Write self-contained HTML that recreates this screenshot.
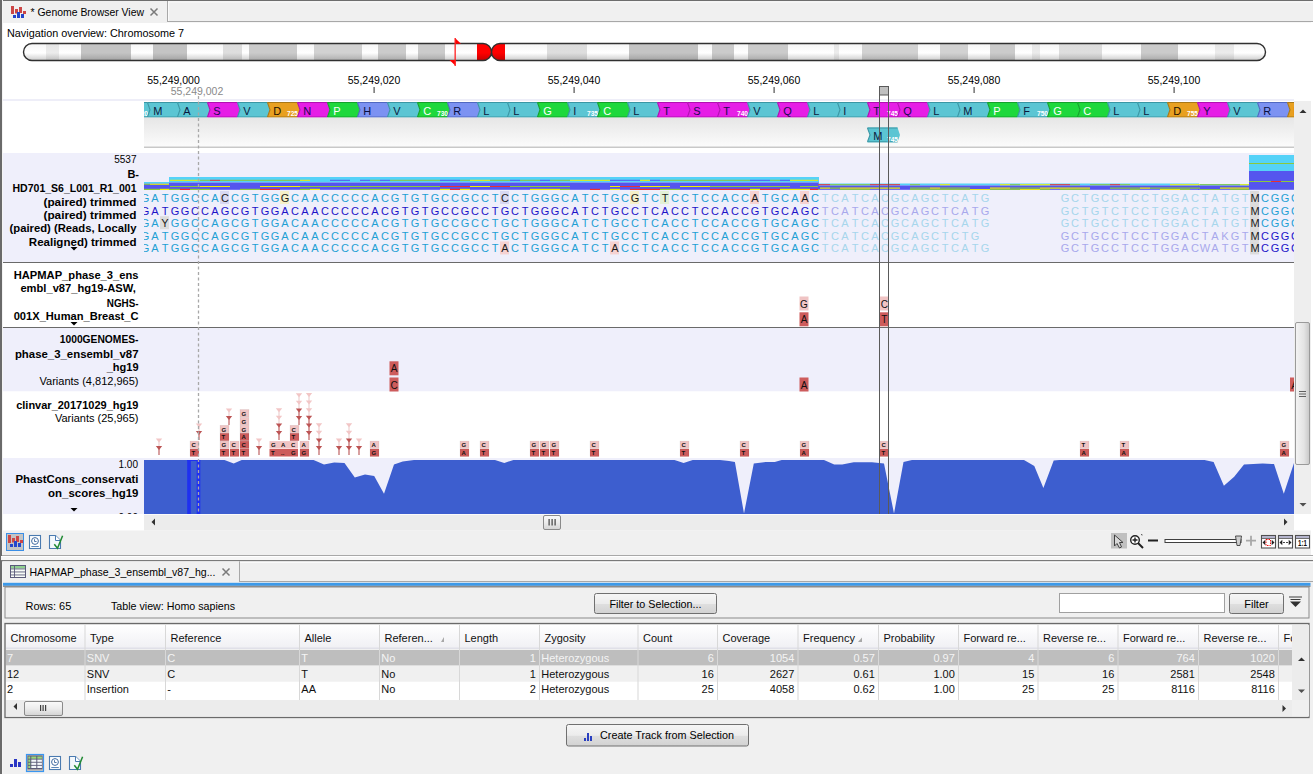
<!DOCTYPE html><html><head><meta charset="utf-8"><title>Genome Browser View</title><style>
*{margin:0;padding:0;box-sizing:border-box}
html,body{width:1313px;height:774px;overflow:hidden;background:#f0f0f0;font-family:"Liberation Sans", sans-serif;font-size:11px;color:#000}
.a{position:absolute}
.t{position:absolute;white-space:pre;line-height:1}
.b{font-weight:bold}
svg{position:absolute;left:0;top:0}
</style></head><body><svg width="1313" height="774" viewBox="0 0 1313 774" font-family="Liberation Sans, sans-serif"><rect x="0" y="0" width="1313" height="774" fill="#f0f0f0" /><rect x="0" y="0" width="1313" height="1" fill="#6e6e6e" /><rect x="0" y="0" width="2" height="774" fill="#6a6a6a" /><rect x="2" y="0" width="1" height="774" fill="#f4f4f4" /><rect x="3" y="1" width="1310" height="22" fill="#f0f0f0" /><rect x="167" y="21" width="1146" height="1" fill="#a8a8a8" /><rect x="167" y="1" width="1" height="21" fill="#a8a8a8" /><rect x="168" y="1.5" width="1145" height="1" fill="#fafafa" /><rect x="168" y="1.5" width="1" height="19.5" fill="#fafafa" /><rect x="167" y="22" width="1146" height="1" fill="#f6f6f6" /><rect x="11" y="6" width="3" height="8" fill="#cc4646" /><rect x="15" y="9" width="3" height="4.5" fill="#cc4646" /><rect x="19" y="7" width="3" height="6" fill="#cc4646" /><rect x="23" y="11" width="3" height="3" fill="#cc4646" /><rect x="13" y="15" width="3" height="3" fill="#2446cc" /><rect x="17" y="12" width="3" height="6" fill="#2446cc" /><rect x="21" y="14" width="3" height="4" fill="#2446cc" /><text x="30.5" y="16" font-size="11" fill="#000" text-anchor="start" font-weight="normal" textLength="113.5" lengthAdjust="spacingAndGlyphs">* Genome Browser View</text><path d="M150.5 8.5 L157.5 15.5 M157.5 8.5 L150.5 15.5" stroke="#7a7a7a" stroke-width="1.5"/><rect x="3" y="23" width="1308" height="532" fill="#ffffff" /><text x="7" y="37" font-size="11" fill="#000" text-anchor="start" font-weight="normal" textLength="177" lengthAdjust="spacingAndGlyphs">Navigation overview: Chromosome 7</text><defs>
<linearGradient id="gw" x1="0" y1="0" x2="0" y2="1"><stop offset="0" stop-color="#f4f4f4"/><stop offset="0.55" stop-color="#ffffff"/><stop offset="1" stop-color="#c8c8c8"/></linearGradient>
<linearGradient id="gl" x1="0" y1="0" x2="0" y2="1"><stop offset="0" stop-color="#e4e4e4"/><stop offset="0.55" stop-color="#ececec"/><stop offset="1" stop-color="#bcbcbc"/></linearGradient>
<linearGradient id="gg" x1="0" y1="0" x2="0" y2="1"><stop offset="0" stop-color="#c4c4c4"/><stop offset="0.55" stop-color="#c4c4c4"/><stop offset="1" stop-color="#a0a0a0"/></linearGradient>
<linearGradient id="gg2" x1="0" y1="0" x2="0" y2="1"><stop offset="0" stop-color="#cbcbcb"/><stop offset="0.55" stop-color="#cbcbcb"/><stop offset="1" stop-color="#a8a8a8"/></linearGradient>
<linearGradient id="gm" x1="0" y1="0" x2="0" y2="1"><stop offset="0" stop-color="#dcdcdc"/><stop offset="0.55" stop-color="#dedede"/><stop offset="1" stop-color="#b4b4b4"/></linearGradient>
<linearGradient id="gm2" x1="0" y1="0" x2="0" y2="1"><stop offset="0" stop-color="#d2d2d2"/><stop offset="0.55" stop-color="#d2d2d2"/><stop offset="1" stop-color="#acacac"/></linearGradient>
<linearGradient id="gr" x1="0" y1="0" x2="0" y2="1"><stop offset="0" stop-color="#ff0000"/><stop offset="0.55" stop-color="#ff0000"/><stop offset="1" stop-color="#c00000"/></linearGradient>
<linearGradient id="ggrad" x1="0" y1="0" x2="0" y2="1"><stop offset="0" stop-color="#e6e6e6"/><stop offset="1" stop-color="#fbfbfb"/></linearGradient>
<clipPath id="chr"><path d="M32 43.5 H483 A8.5 8.5 0 0 1 491.5 52 A8.5 8.5 0 0 1 500 43.5 H1257 A8.5 8.5 0 0 1 1257 60.5 H500 A8.5 8.5 0 0 1 491.5 52 A8.5 8.5 0 0 1 483 60.5 H32 A8.5 8.5 0 0 1 32 43.5 Z"/></clipPath>
<clipPath id="lclip"><rect x="0" y="458" width="144" height="56"/></clipPath><clipPath id="hclip"><rect x="0" y="620" width="1292" height="40"/></clipPath><clipPath id="trk"><rect x="144" y="95" width="1150" height="420"/></clipPath>
</defs><g clip-path="url(#chr)"><rect x="23" y="43" width="23" height="18" fill="url(#gw)" /><rect x="46" y="43" width="13" height="18" fill="url(#gl)" /><rect x="59" y="43" width="22" height="18" fill="url(#gw)" /><rect x="81" y="43" width="50" height="18" fill="url(#gg)" /><rect x="131" y="43" width="22" height="18" fill="url(#gw)" /><rect x="153" y="43" width="34" height="18" fill="url(#gg)" /><rect x="187" y="43" width="36" height="18" fill="url(#gw)" /><rect x="223" y="43" width="19" height="18" fill="url(#gm)" /><rect x="242" y="43" width="7" height="18" fill="url(#gw)" /><rect x="249" y="43" width="48" height="18" fill="url(#gg2)" /><rect x="297" y="43" width="17" height="18" fill="url(#gw)" /><rect x="314" y="43" width="48" height="18" fill="url(#gm2)" /><rect x="362" y="43" width="16" height="18" fill="url(#gw)" /><rect x="378" y="43" width="28" height="18" fill="url(#gg2)" /><rect x="406" y="43" width="12" height="18" fill="url(#gw)" /><rect x="418" y="43" width="27" height="18" fill="url(#gg2)" /><rect x="445" y="43" width="32" height="18" fill="url(#gw)" /><rect x="477" y="43" width="28" height="18" fill="url(#gr)" /><rect x="505" y="43" width="42" height="18" fill="url(#gw)" /><rect x="547" y="43" width="40" height="18" fill="url(#gm)" /><rect x="587" y="43" width="42" height="18" fill="url(#gw)" /><rect x="629" y="43" width="69" height="18" fill="url(#gg)" /><rect x="698" y="43" width="14" height="18" fill="url(#gw)" /><rect x="712" y="43" width="22" height="18" fill="url(#gg2)" /><rect x="734" y="43" width="14" height="18" fill="url(#gw)" /><rect x="748" y="43" width="40" height="18" fill="url(#gg2)" /><rect x="788" y="43" width="46" height="18" fill="url(#gw)" /><rect x="834" y="43" width="5" height="18" fill="url(#gl)" /><rect x="839" y="43" width="23" height="18" fill="url(#gw)" /><rect x="862" y="43" width="56" height="18" fill="url(#gm2)" /><rect x="918" y="43" width="22" height="18" fill="url(#gw)" /><rect x="940" y="43" width="28" height="18" fill="url(#gm2)" /><rect x="968" y="43" width="22" height="18" fill="url(#gw)" /><rect x="990" y="43" width="25" height="18" fill="url(#gg2)" /><rect x="1015" y="43" width="17" height="18" fill="url(#gw)" /><rect x="1032" y="43" width="8" height="18" fill="url(#gl)" /><rect x="1040" y="43" width="19" height="18" fill="url(#gw)" /><rect x="1059" y="43" width="43" height="18" fill="url(#gm)" /><rect x="1102" y="43" width="39" height="18" fill="url(#gw)" /><rect x="1141" y="43" width="37" height="18" fill="url(#gg2)" /><rect x="1178" y="43" width="37" height="18" fill="url(#gw)" /><rect x="1215" y="43" width="19" height="18" fill="url(#gl)" /><rect x="1234" y="43" width="32" height="18" fill="url(#gw)" /></g><path d="M32 43.5 H483 A8.5 8.5 0 0 1 491.5 52 A8.5 8.5 0 0 1 500 43.5 H1257 A8.5 8.5 0 0 1 1257 60.5 H500 A8.5 8.5 0 0 1 491.5 52 A8.5 8.5 0 0 1 483 60.5 H32 A8.5 8.5 0 0 1 32 43.5 Z" fill="none" stroke="#303030" stroke-width="1.4"/><path d="M455 38 L461 43.8 L455 43.8 Z M455.5 65.7 L449.5 60 L455.5 60 Z" fill="#ff0000"/><rect x="454.5" y="38" width="1.3" height="28" fill="#ff2020" /><text x="173.5" y="84" font-size="10.5" fill="#000" text-anchor="middle" font-weight="normal" >55,249,000</text><text x="374" y="84" font-size="10.5" fill="#000" text-anchor="middle" font-weight="normal" >55,249,020</text><rect x="373.5" y="87" width="1.2" height="6" fill="#505050" /><text x="574" y="84" font-size="10.5" fill="#000" text-anchor="middle" font-weight="normal" >55,249,040</text><rect x="573.5" y="87" width="1.2" height="6" fill="#505050" /><text x="774" y="84" font-size="10.5" fill="#000" text-anchor="middle" font-weight="normal" >55,249,060</text><rect x="773.5" y="87" width="1.2" height="6" fill="#505050" /><text x="974" y="84" font-size="10.5" fill="#000" text-anchor="middle" font-weight="normal" >55,249,080</text><rect x="973.5" y="87" width="1.2" height="6" fill="#505050" /><text x="1174" y="84" font-size="10.5" fill="#000" text-anchor="middle" font-weight="normal" >55,249,100</text><rect x="1173.5" y="87" width="1.2" height="6" fill="#505050" /><text x="197" y="95" font-size="10.5" fill="#8a8a8a" text-anchor="middle" font-weight="normal" >55,249,002</text><rect x="3" y="99" width="1291" height="2" fill="#eeeef8" /><g clip-path="url(#trk)"><path d="M117.5 102 L147.5 102 L150 109.75 L147.5 117.5 L117.5 117.5 L120 109.75 Z" fill="#5bc5d3"/><path d="M117.5 102.5 L147.5 102.5 M117.5 117.0 L147.5 117.0" stroke="#3a96a4" stroke-width="1"/><path d="M117.5 102.5 L120 109.75 L117.5 117.0" fill="none" stroke="#3a96a4" stroke-width="1.1"/><text x="148" y="116" font-size="7.5" fill="#ffffff" text-anchor="end" font-weight="bold" textLength="11" lengthAdjust="spacingAndGlyphs">720</text><path d="M147.5 102 L177.5 102 L180 109.75 L177.5 117.5 L147.5 117.5 L150 109.75 Z" fill="#5bc5d3"/><path d="M147.5 102.5 L177.5 102.5 M147.5 117.0 L177.5 117.0" stroke="#3a96a4" stroke-width="1"/><path d="M147.5 102.5 L150 109.75 L147.5 117.0" fill="none" stroke="#3a96a4" stroke-width="1.1"/><text x="153.3" y="114.6" font-size="11" fill="#0a1a40" text-anchor="start" font-weight="normal" >M</text><path d="M177.5 102 L207.5 102 L210 109.75 L207.5 117.5 L177.5 117.5 L180 109.75 Z" fill="#5bc5d3"/><path d="M177.5 102.5 L207.5 102.5 M177.5 117.0 L207.5 117.0" stroke="#3a96a4" stroke-width="1"/><path d="M177.5 102.5 L180 109.75 L177.5 117.0" fill="none" stroke="#3a96a4" stroke-width="1.1"/><text x="183.3" y="114.6" font-size="11" fill="#0a1a40" text-anchor="start" font-weight="normal" >A</text><path d="M207.5 102 L237.5 102 L240 109.75 L237.5 117.5 L207.5 117.5 L210 109.75 Z" fill="#e61ee6"/><path d="M207.5 102.5 L237.5 102.5 M207.5 117.0 L237.5 117.0" stroke="#b010b0" stroke-width="1"/><path d="M207.5 102.5 L210 109.75 L207.5 117.0" fill="none" stroke="#b010b0" stroke-width="1.1"/><text x="213.3" y="114.6" font-size="11" fill="#1a0a50" text-anchor="start" font-weight="normal" >S</text><path d="M237.5 102 L267.5 102 L270 109.75 L267.5 117.5 L237.5 117.5 L240 109.75 Z" fill="#5bc5d3"/><path d="M237.5 102.5 L267.5 102.5 M237.5 117.0 L267.5 117.0" stroke="#3a96a4" stroke-width="1"/><path d="M237.5 102.5 L240 109.75 L237.5 117.0" fill="none" stroke="#3a96a4" stroke-width="1.1"/><text x="243.3" y="114.6" font-size="11" fill="#0a1a40" text-anchor="start" font-weight="normal" >V</text><path d="M267.5 102 L297.5 102 L300 109.75 L297.5 117.5 L267.5 117.5 L270 109.75 Z" fill="#e8a020"/><path d="M267.5 102.5 L297.5 102.5 M267.5 117.0 L297.5 117.0" stroke="#a87818" stroke-width="1"/><path d="M267.5 102.5 L270 109.75 L267.5 117.0" fill="none" stroke="#a87818" stroke-width="1.1"/><text x="273.3" y="114.6" font-size="11" fill="#201000" text-anchor="start" font-weight="normal" >D</text><text x="298" y="116" font-size="7.5" fill="#ffffff" text-anchor="end" font-weight="bold" textLength="11" lengthAdjust="spacingAndGlyphs">725</text><path d="M297.5 102 L327.5 102 L330 109.75 L327.5 117.5 L297.5 117.5 L300 109.75 Z" fill="#e61ee6"/><path d="M297.5 102.5 L327.5 102.5 M297.5 117.0 L327.5 117.0" stroke="#b010b0" stroke-width="1"/><path d="M297.5 102.5 L300 109.75 L297.5 117.0" fill="none" stroke="#b010b0" stroke-width="1.1"/><text x="303.3" y="114.6" font-size="11" fill="#1a0a50" text-anchor="start" font-weight="normal" >N</text><path d="M327.5 102 L357.5 102 L360 109.75 L357.5 117.5 L327.5 117.5 L330 109.75 Z" fill="#1ed83c"/><path d="M327.5 102.5 L357.5 102.5 M327.5 117.0 L357.5 117.0" stroke="#14a02c" stroke-width="1"/><path d="M327.5 102.5 L330 109.75 L327.5 117.0" fill="none" stroke="#14a02c" stroke-width="1.1"/><text x="333.3" y="114.6" font-size="11" fill="#ffffff" text-anchor="start" font-weight="normal" >P</text><path d="M357.5 102 L387.5 102 L390 109.75 L387.5 117.5 L357.5 117.5 L360 109.75 Z" fill="#7c92f2"/><path d="M357.5 102.5 L387.5 102.5 M357.5 117.0 L387.5 117.0" stroke="#5068c0" stroke-width="1"/><path d="M357.5 102.5 L360 109.75 L357.5 117.0" fill="none" stroke="#5068c0" stroke-width="1.1"/><text x="363.3" y="114.6" font-size="11" fill="#0a1040" text-anchor="start" font-weight="normal" >H</text><path d="M387.5 102 L417.5 102 L420 109.75 L417.5 117.5 L387.5 117.5 L390 109.75 Z" fill="#5bc5d3"/><path d="M387.5 102.5 L417.5 102.5 M387.5 117.0 L417.5 117.0" stroke="#3a96a4" stroke-width="1"/><path d="M387.5 102.5 L390 109.75 L387.5 117.0" fill="none" stroke="#3a96a4" stroke-width="1.1"/><text x="393.3" y="114.6" font-size="11" fill="#0a1a40" text-anchor="start" font-weight="normal" >V</text><path d="M417.5 102 L447.5 102 L450 109.75 L447.5 117.5 L417.5 117.5 L420 109.75 Z" fill="#1ed83c"/><path d="M417.5 102.5 L447.5 102.5 M417.5 117.0 L447.5 117.0" stroke="#14a02c" stroke-width="1"/><path d="M417.5 102.5 L420 109.75 L417.5 117.0" fill="none" stroke="#14a02c" stroke-width="1.1"/><text x="423.3" y="114.6" font-size="11" fill="#ffffff" text-anchor="start" font-weight="normal" >C</text><text x="448" y="116" font-size="7.5" fill="#ffffff" text-anchor="end" font-weight="bold" textLength="11" lengthAdjust="spacingAndGlyphs">730</text><path d="M447.5 102 L477.5 102 L480 109.75 L477.5 117.5 L447.5 117.5 L450 109.75 Z" fill="#7c92f2"/><path d="M447.5 102.5 L477.5 102.5 M447.5 117.0 L477.5 117.0" stroke="#5068c0" stroke-width="1"/><path d="M447.5 102.5 L450 109.75 L447.5 117.0" fill="none" stroke="#5068c0" stroke-width="1.1"/><text x="453.3" y="114.6" font-size="11" fill="#0a1040" text-anchor="start" font-weight="normal" >R</text><path d="M477.5 102 L507.5 102 L510 109.75 L507.5 117.5 L477.5 117.5 L480 109.75 Z" fill="#5bc5d3"/><path d="M477.5 102.5 L507.5 102.5 M477.5 117.0 L507.5 117.0" stroke="#3a96a4" stroke-width="1"/><path d="M477.5 102.5 L480 109.75 L477.5 117.0" fill="none" stroke="#3a96a4" stroke-width="1.1"/><text x="483.3" y="114.6" font-size="11" fill="#0a1a40" text-anchor="start" font-weight="normal" >L</text><path d="M507.5 102 L537.5 102 L540 109.75 L537.5 117.5 L507.5 117.5 L510 109.75 Z" fill="#5bc5d3"/><path d="M507.5 102.5 L537.5 102.5 M507.5 117.0 L537.5 117.0" stroke="#3a96a4" stroke-width="1"/><path d="M507.5 102.5 L510 109.75 L507.5 117.0" fill="none" stroke="#3a96a4" stroke-width="1.1"/><text x="513.3" y="114.6" font-size="11" fill="#0a1a40" text-anchor="start" font-weight="normal" >L</text><path d="M537.5 102 L567.5 102 L570 109.75 L567.5 117.5 L537.5 117.5 L540 109.75 Z" fill="#1ed83c"/><path d="M537.5 102.5 L567.5 102.5 M537.5 117.0 L567.5 117.0" stroke="#14a02c" stroke-width="1"/><path d="M537.5 102.5 L540 109.75 L537.5 117.0" fill="none" stroke="#14a02c" stroke-width="1.1"/><text x="543.3" y="114.6" font-size="11" fill="#ffffff" text-anchor="start" font-weight="normal" >G</text><path d="M567.5 102 L597.5 102 L600 109.75 L597.5 117.5 L567.5 117.5 L570 109.75 Z" fill="#5bc5d3"/><path d="M567.5 102.5 L597.5 102.5 M567.5 117.0 L597.5 117.0" stroke="#3a96a4" stroke-width="1"/><path d="M567.5 102.5 L570 109.75 L567.5 117.0" fill="none" stroke="#3a96a4" stroke-width="1.1"/><text x="573.3" y="114.6" font-size="11" fill="#0a1a40" text-anchor="start" font-weight="normal" >I</text><text x="598" y="116" font-size="7.5" fill="#ffffff" text-anchor="end" font-weight="bold" textLength="11" lengthAdjust="spacingAndGlyphs">735</text><path d="M597.5 102 L627.5 102 L630 109.75 L627.5 117.5 L597.5 117.5 L600 109.75 Z" fill="#1ed83c"/><path d="M597.5 102.5 L627.5 102.5 M597.5 117.0 L627.5 117.0" stroke="#14a02c" stroke-width="1"/><path d="M597.5 102.5 L600 109.75 L597.5 117.0" fill="none" stroke="#14a02c" stroke-width="1.1"/><text x="603.3" y="114.6" font-size="11" fill="#ffffff" text-anchor="start" font-weight="normal" >C</text><path d="M627.5 102 L657.5 102 L660 109.75 L657.5 117.5 L627.5 117.5 L630 109.75 Z" fill="#5bc5d3"/><path d="M627.5 102.5 L657.5 102.5 M627.5 117.0 L657.5 117.0" stroke="#3a96a4" stroke-width="1"/><path d="M627.5 102.5 L630 109.75 L627.5 117.0" fill="none" stroke="#3a96a4" stroke-width="1.1"/><text x="633.3" y="114.6" font-size="11" fill="#0a1a40" text-anchor="start" font-weight="normal" >L</text><path d="M657.5 102 L687.5 102 L690 109.75 L687.5 117.5 L657.5 117.5 L660 109.75 Z" fill="#e61ee6"/><path d="M657.5 102.5 L687.5 102.5 M657.5 117.0 L687.5 117.0" stroke="#b010b0" stroke-width="1"/><path d="M657.5 102.5 L660 109.75 L657.5 117.0" fill="none" stroke="#b010b0" stroke-width="1.1"/><text x="663.3" y="114.6" font-size="11" fill="#1a0a50" text-anchor="start" font-weight="normal" >T</text><path d="M687.5 102 L717.5 102 L720 109.75 L717.5 117.5 L687.5 117.5 L690 109.75 Z" fill="#e61ee6"/><path d="M687.5 102.5 L717.5 102.5 M687.5 117.0 L717.5 117.0" stroke="#b010b0" stroke-width="1"/><path d="M687.5 102.5 L690 109.75 L687.5 117.0" fill="none" stroke="#b010b0" stroke-width="1.1"/><text x="693.3" y="114.6" font-size="11" fill="#1a0a50" text-anchor="start" font-weight="normal" >S</text><path d="M717.5 102 L747.5 102 L750 109.75 L747.5 117.5 L717.5 117.5 L720 109.75 Z" fill="#e61ee6"/><path d="M717.5 102.5 L747.5 102.5 M717.5 117.0 L747.5 117.0" stroke="#b010b0" stroke-width="1"/><path d="M717.5 102.5 L720 109.75 L717.5 117.0" fill="none" stroke="#b010b0" stroke-width="1.1"/><text x="723.3" y="114.6" font-size="11" fill="#1a0a50" text-anchor="start" font-weight="normal" >T</text><text x="748" y="116" font-size="7.5" fill="#ffffff" text-anchor="end" font-weight="bold" textLength="11" lengthAdjust="spacingAndGlyphs">740</text><path d="M747.5 102 L777.5 102 L780 109.75 L777.5 117.5 L747.5 117.5 L750 109.75 Z" fill="#5bc5d3"/><path d="M747.5 102.5 L777.5 102.5 M747.5 117.0 L777.5 117.0" stroke="#3a96a4" stroke-width="1"/><path d="M747.5 102.5 L750 109.75 L747.5 117.0" fill="none" stroke="#3a96a4" stroke-width="1.1"/><text x="753.3" y="114.6" font-size="11" fill="#0a1a40" text-anchor="start" font-weight="normal" >V</text><path d="M777.5 102 L807.5 102 L810 109.75 L807.5 117.5 L777.5 117.5 L780 109.75 Z" fill="#e61ee6"/><path d="M777.5 102.5 L807.5 102.5 M777.5 117.0 L807.5 117.0" stroke="#b010b0" stroke-width="1"/><path d="M777.5 102.5 L780 109.75 L777.5 117.0" fill="none" stroke="#b010b0" stroke-width="1.1"/><text x="783.3" y="114.6" font-size="11" fill="#1a0a50" text-anchor="start" font-weight="normal" >Q</text><path d="M807.5 102 L837.5 102 L840 109.75 L837.5 117.5 L807.5 117.5 L810 109.75 Z" fill="#5bc5d3"/><path d="M807.5 102.5 L837.5 102.5 M807.5 117.0 L837.5 117.0" stroke="#3a96a4" stroke-width="1"/><path d="M807.5 102.5 L810 109.75 L807.5 117.0" fill="none" stroke="#3a96a4" stroke-width="1.1"/><text x="813.3" y="114.6" font-size="11" fill="#0a1a40" text-anchor="start" font-weight="normal" >L</text><path d="M837.5 102 L867.5 102 L870 109.75 L867.5 117.5 L837.5 117.5 L840 109.75 Z" fill="#5bc5d3"/><path d="M837.5 102.5 L867.5 102.5 M837.5 117.0 L867.5 117.0" stroke="#3a96a4" stroke-width="1"/><path d="M837.5 102.5 L840 109.75 L837.5 117.0" fill="none" stroke="#3a96a4" stroke-width="1.1"/><text x="843.3" y="114.6" font-size="11" fill="#0a1a40" text-anchor="start" font-weight="normal" >I</text><path d="M867.5 102 L897.5 102 L900 109.75 L897.5 117.5 L867.5 117.5 L870 109.75 Z" fill="#e61ee6"/><path d="M867.5 102.5 L897.5 102.5 M867.5 117.0 L897.5 117.0" stroke="#b010b0" stroke-width="1"/><path d="M867.5 102.5 L870 109.75 L867.5 117.0" fill="none" stroke="#b010b0" stroke-width="1.1"/><text x="873.3" y="114.6" font-size="11" fill="#1a0a50" text-anchor="start" font-weight="normal" >T</text><text x="898" y="116" font-size="7.5" fill="#ffffff" text-anchor="end" font-weight="bold" textLength="11" lengthAdjust="spacingAndGlyphs">745</text><path d="M897.5 102 L927.5 102 L930 109.75 L927.5 117.5 L897.5 117.5 L900 109.75 Z" fill="#e61ee6"/><path d="M897.5 102.5 L927.5 102.5 M897.5 117.0 L927.5 117.0" stroke="#b010b0" stroke-width="1"/><path d="M897.5 102.5 L900 109.75 L897.5 117.0" fill="none" stroke="#b010b0" stroke-width="1.1"/><text x="903.3" y="114.6" font-size="11" fill="#1a0a50" text-anchor="start" font-weight="normal" >Q</text><path d="M927.5 102 L957.5 102 L960 109.75 L957.5 117.5 L927.5 117.5 L930 109.75 Z" fill="#5bc5d3"/><path d="M927.5 102.5 L957.5 102.5 M927.5 117.0 L957.5 117.0" stroke="#3a96a4" stroke-width="1"/><path d="M927.5 102.5 L930 109.75 L927.5 117.0" fill="none" stroke="#3a96a4" stroke-width="1.1"/><text x="933.3" y="114.6" font-size="11" fill="#0a1a40" text-anchor="start" font-weight="normal" >L</text><path d="M957.5 102 L987.5 102 L990 109.75 L987.5 117.5 L957.5 117.5 L960 109.75 Z" fill="#5bc5d3"/><path d="M957.5 102.5 L987.5 102.5 M957.5 117.0 L987.5 117.0" stroke="#3a96a4" stroke-width="1"/><path d="M957.5 102.5 L960 109.75 L957.5 117.0" fill="none" stroke="#3a96a4" stroke-width="1.1"/><text x="963.3" y="114.6" font-size="11" fill="#0a1a40" text-anchor="start" font-weight="normal" >M</text><path d="M987.5 102 L1017.5 102 L1020 109.75 L1017.5 117.5 L987.5 117.5 L990 109.75 Z" fill="#1ed83c"/><path d="M987.5 102.5 L1017.5 102.5 M987.5 117.0 L1017.5 117.0" stroke="#14a02c" stroke-width="1"/><path d="M987.5 102.5 L990 109.75 L987.5 117.0" fill="none" stroke="#14a02c" stroke-width="1.1"/><text x="993.3" y="114.6" font-size="11" fill="#ffffff" text-anchor="start" font-weight="normal" >P</text><path d="M1017.5 102 L1047.5 102 L1050 109.75 L1047.5 117.5 L1017.5 117.5 L1020 109.75 Z" fill="#5bc5d3"/><path d="M1017.5 102.5 L1047.5 102.5 M1017.5 117.0 L1047.5 117.0" stroke="#3a96a4" stroke-width="1"/><path d="M1017.5 102.5 L1020 109.75 L1017.5 117.0" fill="none" stroke="#3a96a4" stroke-width="1.1"/><text x="1023.3" y="114.6" font-size="11" fill="#0a1a40" text-anchor="start" font-weight="normal" >F</text><text x="1048" y="116" font-size="7.5" fill="#ffffff" text-anchor="end" font-weight="bold" textLength="11" lengthAdjust="spacingAndGlyphs">750</text><path d="M1047.5 102 L1077.5 102 L1080 109.75 L1077.5 117.5 L1047.5 117.5 L1050 109.75 Z" fill="#1ed83c"/><path d="M1047.5 102.5 L1077.5 102.5 M1047.5 117.0 L1077.5 117.0" stroke="#14a02c" stroke-width="1"/><path d="M1047.5 102.5 L1050 109.75 L1047.5 117.0" fill="none" stroke="#14a02c" stroke-width="1.1"/><text x="1053.3" y="114.6" font-size="11" fill="#ffffff" text-anchor="start" font-weight="normal" >G</text><path d="M1077.5 102 L1107.5 102 L1110 109.75 L1107.5 117.5 L1077.5 117.5 L1080 109.75 Z" fill="#1ed83c"/><path d="M1077.5 102.5 L1107.5 102.5 M1077.5 117.0 L1107.5 117.0" stroke="#14a02c" stroke-width="1"/><path d="M1077.5 102.5 L1080 109.75 L1077.5 117.0" fill="none" stroke="#14a02c" stroke-width="1.1"/><text x="1083.3" y="114.6" font-size="11" fill="#ffffff" text-anchor="start" font-weight="normal" >C</text><path d="M1107.5 102 L1137.5 102 L1140 109.75 L1137.5 117.5 L1107.5 117.5 L1110 109.75 Z" fill="#5bc5d3"/><path d="M1107.5 102.5 L1137.5 102.5 M1107.5 117.0 L1137.5 117.0" stroke="#3a96a4" stroke-width="1"/><path d="M1107.5 102.5 L1110 109.75 L1107.5 117.0" fill="none" stroke="#3a96a4" stroke-width="1.1"/><text x="1113.3" y="114.6" font-size="11" fill="#0a1a40" text-anchor="start" font-weight="normal" >L</text><path d="M1137.5 102 L1167.5 102 L1170 109.75 L1167.5 117.5 L1137.5 117.5 L1140 109.75 Z" fill="#5bc5d3"/><path d="M1137.5 102.5 L1167.5 102.5 M1137.5 117.0 L1167.5 117.0" stroke="#3a96a4" stroke-width="1"/><path d="M1137.5 102.5 L1140 109.75 L1137.5 117.0" fill="none" stroke="#3a96a4" stroke-width="1.1"/><text x="1143.3" y="114.6" font-size="11" fill="#0a1a40" text-anchor="start" font-weight="normal" >L</text><path d="M1167.5 102 L1197.5 102 L1200 109.75 L1197.5 117.5 L1167.5 117.5 L1170 109.75 Z" fill="#e8a020"/><path d="M1167.5 102.5 L1197.5 102.5 M1167.5 117.0 L1197.5 117.0" stroke="#a87818" stroke-width="1"/><path d="M1167.5 102.5 L1170 109.75 L1167.5 117.0" fill="none" stroke="#a87818" stroke-width="1.1"/><text x="1173.3" y="114.6" font-size="11" fill="#201000" text-anchor="start" font-weight="normal" >D</text><text x="1198" y="116" font-size="7.5" fill="#ffffff" text-anchor="end" font-weight="bold" textLength="11" lengthAdjust="spacingAndGlyphs">755</text><path d="M1197.5 102 L1227.5 102 L1230 109.75 L1227.5 117.5 L1197.5 117.5 L1200 109.75 Z" fill="#e61ee6"/><path d="M1197.5 102.5 L1227.5 102.5 M1197.5 117.0 L1227.5 117.0" stroke="#b010b0" stroke-width="1"/><path d="M1197.5 102.5 L1200 109.75 L1197.5 117.0" fill="none" stroke="#b010b0" stroke-width="1.1"/><text x="1203.3" y="114.6" font-size="11" fill="#1a0a50" text-anchor="start" font-weight="normal" >Y</text><path d="M1227.5 102 L1257.5 102 L1260 109.75 L1257.5 117.5 L1227.5 117.5 L1230 109.75 Z" fill="#5bc5d3"/><path d="M1227.5 102.5 L1257.5 102.5 M1227.5 117.0 L1257.5 117.0" stroke="#3a96a4" stroke-width="1"/><path d="M1227.5 102.5 L1230 109.75 L1227.5 117.0" fill="none" stroke="#3a96a4" stroke-width="1.1"/><text x="1233.3" y="114.6" font-size="11" fill="#0a1a40" text-anchor="start" font-weight="normal" >V</text><path d="M1257.5 102 L1287.5 102 L1290 109.75 L1287.5 117.5 L1257.5 117.5 L1260 109.75 Z" fill="#7c92f2"/><path d="M1257.5 102.5 L1287.5 102.5 M1257.5 117.0 L1287.5 117.0" stroke="#5068c0" stroke-width="1"/><path d="M1257.5 102.5 L1260 109.75 L1257.5 117.0" fill="none" stroke="#5068c0" stroke-width="1.1"/><text x="1263.3" y="114.6" font-size="11" fill="#0a1040" text-anchor="start" font-weight="normal" >R</text><path d="M1287.5 102 L1317.5 102 L1320 109.75 L1317.5 117.5 L1287.5 117.5 L1290 109.75 Z" fill="#e8a020"/><path d="M1287.5 102.5 L1317.5 102.5 M1287.5 117.0 L1317.5 117.0" stroke="#a87818" stroke-width="1"/><path d="M1287.5 102.5 L1290 109.75 L1287.5 117.0" fill="none" stroke="#a87818" stroke-width="1.1"/><text x="1293.3" y="114.6" font-size="11" fill="#201000" text-anchor="start" font-weight="normal" >D</text><rect x="144" y="117.5" width="1150" height="29" fill="url(#ggrad)" /><rect x="144" y="146.5" width="1150" height="1.5" fill="#c8c8c8" /><path d="M867.5 127.5 L897.5 127.5 L900 134.9 L897.5 142.3 L867.5 142.3 L870 134.9 Z" fill="#5bc5d3"/><path d="M867.5 128.0 L897.5 128.0 M867.5 141.8 L897.5 141.8" stroke="#3a96a4" stroke-width="1"/><path d="M867.5 128.0 L870 134.9 L867.5 141.8" fill="none" stroke="#3a96a4" stroke-width="1.1"/><text x="873.3" y="140.1" font-size="11" fill="#0a1a40" text-anchor="start" font-weight="normal" >M</text><text x="898" y="141.5" font-size="7.5" fill="#ffffff" text-anchor="end" font-weight="bold" textLength="11" lengthAdjust="spacingAndGlyphs">745</text></g><rect x="3" y="153" width="1291" height="109" fill="#efeffb" /><rect x="3" y="262" width="1291" height="1" fill="#6a6a6a" /><rect x="3" y="263" width="1291" height="64" fill="#ffffff" /><rect x="3" y="327" width="1291" height="1" fill="#6a6a6a" /><rect x="3" y="328" width="1291" height="63.5" fill="#efeffb" /><rect x="3" y="391.5" width="1291" height="66.5" fill="#ffffff" /><rect x="3" y="458" width="1291" height="56" fill="#efeffb" /><rect x="3" y="514" width="141" height="16.5" fill="#ffffff" /><text x="136.5" y="163" font-size="10" fill="#000" text-anchor="end" font-weight="normal" >5537</text><text x="139" y="178" font-size="11" fill="#000" text-anchor="end" font-weight="bold" >B-</text><text x="136.5" y="191.8" font-size="11" fill="#000" text-anchor="end" font-weight="bold" textLength="124" lengthAdjust="spacingAndGlyphs">HD701_S6_L001_R1_001</text><text x="136.5" y="205.6" font-size="11" fill="#000" text-anchor="end" font-weight="bold" textLength="93" lengthAdjust="spacingAndGlyphs">(paired) trimmed</text><text x="136.5" y="218.6" font-size="11" fill="#000" text-anchor="end" font-weight="bold" textLength="93" lengthAdjust="spacingAndGlyphs">(paired) trimmed</text><text x="136.5" y="232.4" font-size="11" fill="#000" text-anchor="end" font-weight="bold" textLength="127" lengthAdjust="spacingAndGlyphs">(paired) (Reads, Locally</text><text x="136.5" y="246.4" font-size="11" fill="#000" text-anchor="end" font-weight="bold" textLength="107.7" lengthAdjust="spacingAndGlyphs">Realigned) trimmed</text><path d="M70.5 247 L77.5 247 L74 250.5 Z" fill="#000"/><text x="138.5" y="278.8" font-size="11" fill="#000" text-anchor="end" font-weight="bold" textLength="124.8" lengthAdjust="spacingAndGlyphs">HAPMAP_phase_3_ens</text><text x="135.8" y="292.4" font-size="11" fill="#000" text-anchor="end" font-weight="bold" textLength="115.4" lengthAdjust="spacingAndGlyphs">embl_v87_hg19-ASW,</text><text x="138.5" y="306.9" font-size="11" fill="#000" text-anchor="end" font-weight="bold" textLength="31.7" lengthAdjust="spacingAndGlyphs">NGHS-</text><text x="138.5" y="319.5" font-size="11" fill="#000" text-anchor="end" font-weight="bold" textLength="124.8" lengthAdjust="spacingAndGlyphs">001X_Human_Breast_C</text><path d="M70.5 322 L77.5 322 L74 325.5 Z" fill="#000"/><text x="138.5" y="343" font-size="11" fill="#000" text-anchor="end" font-weight="bold" textLength="78.7" lengthAdjust="spacingAndGlyphs">1000GENOMES-</text><text x="138.5" y="357.5" font-size="11" fill="#000" text-anchor="end" font-weight="bold" textLength="123.6" lengthAdjust="spacingAndGlyphs">phase_3_ensembl_v87</text><text x="138.5" y="371" font-size="11" fill="#000" text-anchor="end" font-weight="bold" >_hg19</text><text x="138.5" y="384.6" font-size="11" fill="#000" text-anchor="end" font-weight="normal" textLength="99" lengthAdjust="spacingAndGlyphs">Variants (4,812,965)</text><text x="138.5" y="408.8" font-size="11" fill="#000" text-anchor="end" font-weight="bold" >clinvar_20171029_hg19</text><text x="138.5" y="422.4" font-size="11" fill="#000" text-anchor="end" font-weight="normal" >Variants (25,965)</text><text x="138" y="467.6" font-size="10" fill="#000" text-anchor="end" font-weight="normal" >1.00</text><text x="138.5" y="483" font-size="11" fill="#000" text-anchor="end" font-weight="bold" textLength="123" lengthAdjust="spacingAndGlyphs">PhastCons_conservati</text><text x="138.5" y="496.6" font-size="11" fill="#000" text-anchor="end" font-weight="bold" textLength="90.4" lengthAdjust="spacingAndGlyphs">on_scores_hg19</text><path d="M70.5 508 L77.5 508 L74 511.5 Z" fill="#000"/><g clip-path="url(#lclip)"><text x="138" y="520.5" font-size="10" fill="#000" text-anchor="end" font-weight="normal" >0.00</text></g><g clip-path="url(#trk)"><rect x="144" y="182" width="25" height="1.8" fill="#55d2f8" /><rect x="144" y="183.8" width="25" height="6" fill="#5555ee" /><rect x="169" y="177" width="650" height="5.5" fill="#55d2f8" /><rect x="169" y="182.5" width="650" height="7.3" fill="#5555ee" /><rect x="818" y="183.5" width="381" height="2" fill="#55d2f8" /><rect x="818" y="185.5" width="381" height="4.3" fill="#5555ee" /><rect x="1198" y="184" width="51" height="1.5" fill="#55d2f8" /><rect x="1198" y="185.5" width="51" height="4.3" fill="#5555ee" /><rect x="1249" y="155" width="45" height="16" fill="#55d2f8" /><rect x="1249" y="171" width="45" height="18.8" fill="#5555ee" /><rect x="1249" y="163" width="45" height="1" fill="#8cc83c" /><rect x="1249" y="181" width="45" height="1" fill="#8cc83c" /><rect x="1271" y="181" width="10" height="1" fill="#e83030" /><rect x="170" y="179.8" width="20" height="1" fill="#f0f000" /><rect x="190" y="179.8" width="10" height="1" fill="#f0f000" /><rect x="200" y="179.8" width="10" height="1" fill="#8cc83c" /><rect x="210" y="179.8" width="10" height="1" fill="#e83030" /><rect x="220" y="179.8" width="10" height="1" fill="#8cc83c" /><rect x="230" y="179.8" width="20" height="1" fill="#8cc83c" /><rect x="250" y="179.8" width="10" height="1" fill="#8cc83c" /><rect x="260" y="179.8" width="20" height="1" fill="#8cc83c" /><rect x="280" y="179.8" width="20" height="1" fill="#8cc83c" /><rect x="300" y="179.8" width="10" height="1" fill="#f0f000" /><rect x="330" y="179.8" width="20" height="1" fill="#5555ee" /><rect x="360" y="179.8" width="10" height="1" fill="#5555ee" /><rect x="370" y="179.8" width="10" height="1" fill="#8cc83c" /><rect x="380" y="179.8" width="10" height="1" fill="#5555ee" /><rect x="390" y="179.8" width="20" height="1" fill="#8cc83c" /><rect x="410" y="179.8" width="30" height="1" fill="#8cc83c" /><rect x="440" y="179.8" width="20" height="1" fill="#5555ee" /><rect x="460" y="179.8" width="10" height="1" fill="#8cc83c" /><rect x="470" y="179.8" width="20" height="1" fill="#f0f000" /><rect x="490" y="179.8" width="20" height="1" fill="#8cc83c" /><rect x="510" y="179.8" width="10" height="1" fill="#5555ee" /><rect x="520" y="179.8" width="20" height="1" fill="#8cc83c" /><rect x="540" y="179.8" width="10" height="1" fill="#5555ee" /><rect x="550" y="179.8" width="20" height="1" fill="#8cc83c" /><rect x="570" y="179.8" width="10" height="1" fill="#f0f000" /><rect x="580" y="179.8" width="30" height="1" fill="#f0f000" /><rect x="610" y="179.8" width="10" height="1" fill="#5555ee" /><rect x="620" y="179.8" width="20" height="1" fill="#5555ee" /><rect x="640" y="179.8" width="10" height="1" fill="#f0f000" /><rect x="650" y="179.8" width="10" height="1" fill="#5555ee" /><rect x="660" y="179.8" width="10" height="1" fill="#8cc83c" /><rect x="670" y="179.8" width="20" height="1" fill="#8cc83c" /><rect x="690" y="179.8" width="10" height="1" fill="#8cc83c" /><rect x="700" y="179.8" width="20" height="1" fill="#8cc83c" /><rect x="720" y="179.8" width="30" height="1" fill="#8cc83c" /><rect x="750" y="179.8" width="20" height="1" fill="#5555ee" /><rect x="770" y="179.8" width="10" height="1" fill="#8cc83c" /><rect x="780" y="179.8" width="10" height="1" fill="#5555ee" /><rect x="790" y="179.8" width="20" height="1" fill="#f0f000" /><rect x="810" y="179.8" width="8" height="1" fill="#f0f000" /><rect x="169" y="186" width="1" height="1" fill="#5555ee" /><rect x="170" y="186" width="30" height="1" fill="#8cc83c" /><rect x="200" y="186" width="30" height="1" fill="#f0f000" /><rect x="230" y="186" width="30" height="1" fill="#5555ee" /><rect x="260" y="186" width="30" height="1" fill="#f0f000" /><rect x="290" y="186" width="10" height="1" fill="#f0f000" /><rect x="300" y="186" width="30" height="1" fill="#8cc83c" /><rect x="330" y="186" width="20" height="1" fill="#8cc83c" /><rect x="350" y="186" width="20" height="1" fill="#8cc83c" /><rect x="370" y="186" width="10" height="1" fill="#8cc83c" /><rect x="380" y="186" width="10" height="1" fill="#8cc83c" /><rect x="390" y="186" width="10" height="1" fill="#8cc83c" /><rect x="400" y="186" width="20" height="1" fill="#8cc83c" /><rect x="420" y="186" width="20" height="1" fill="#8cc83c" /><rect x="440" y="186" width="10" height="1" fill="#e83030" /><rect x="450" y="186" width="20" height="1" fill="#e83030" /><rect x="470" y="186" width="10" height="1" fill="#f0f000" /><rect x="480" y="186" width="10" height="1" fill="#f0f000" /><rect x="490" y="186" width="20" height="1" fill="#e83030" /><rect x="510" y="186" width="10" height="1" fill="#8cc83c" /><rect x="520" y="186" width="10" height="1" fill="#8cc83c" /><rect x="530" y="186" width="10" height="1" fill="#8cc83c" /><rect x="540" y="186" width="20" height="1" fill="#8cc83c" /><rect x="560" y="186" width="10" height="1" fill="#8cc83c" /><rect x="570" y="186" width="20" height="1" fill="#5555ee" /><rect x="590" y="186" width="20" height="1" fill="#5555ee" /><rect x="610" y="186" width="10" height="1" fill="#f0f000" /><rect x="620" y="186" width="20" height="1" fill="#e83030" /><rect x="640" y="186" width="30" height="1" fill="#f0f000" /><rect x="670" y="186" width="10" height="1" fill="#5555ee" /><rect x="680" y="186" width="30" height="1" fill="#f0f000" /><rect x="710" y="186" width="20" height="1" fill="#8cc83c" /><rect x="730" y="186" width="20" height="1" fill="#8cc83c" /><rect x="750" y="186" width="30" height="1" fill="#8cc83c" /><rect x="780" y="186" width="10" height="1" fill="#8cc83c" /><rect x="790" y="186" width="10" height="1" fill="#5555ee" /><rect x="800" y="186" width="10" height="1" fill="#8cc83c" /><rect x="810" y="186" width="8" height="1" fill="#8cc83c" /><rect x="169" y="188.8" width="11" height="1.2" fill="#8cc83c" /><rect x="180" y="188.8" width="10" height="1.2" fill="#e83030" /><rect x="190" y="188.8" width="20" height="1.2" fill="#8cc83c" /><rect x="240" y="188.8" width="20" height="1.2" fill="#8cc83c" /><rect x="260" y="188.8" width="20" height="1.2" fill="#e83030" /><rect x="300" y="188.8" width="10" height="1.2" fill="#8cc83c" /><rect x="310" y="188.8" width="10" height="1.2" fill="#f0f000" /><rect x="350" y="188.8" width="30" height="1.2" fill="#8cc83c" /><rect x="380" y="188.8" width="10" height="1.2" fill="#8cc83c" /><rect x="440" y="188.8" width="10" height="1.2" fill="#f0f000" /><rect x="450" y="188.8" width="10" height="1.2" fill="#e83030" /><rect x="460" y="188.8" width="10" height="1.2" fill="#f0f000" /><rect x="530" y="188.8" width="10" height="1.2" fill="#f0f000" /><rect x="540" y="188.8" width="20" height="1.2" fill="#f0f000" /><rect x="560" y="188.8" width="10" height="1.2" fill="#8cc83c" /><rect x="590" y="188.8" width="10" height="1.2" fill="#e83030" /><rect x="610" y="188.8" width="10" height="1.2" fill="#f0f000" /><rect x="630" y="188.8" width="30" height="1.2" fill="#e83030" /><rect x="660" y="188.8" width="10" height="1.2" fill="#8cc83c" /><rect x="670" y="188.8" width="10" height="1.2" fill="#8cc83c" /><rect x="710" y="188.8" width="20" height="1.2" fill="#e83030" /><rect x="730" y="188.8" width="20" height="1.2" fill="#e83030" /><rect x="750" y="188.8" width="10" height="1.2" fill="#f0f000" /><rect x="760" y="188.8" width="10" height="1.2" fill="#e83030" /><rect x="770" y="188.8" width="10" height="1.2" fill="#e83030" /><rect x="780" y="188.8" width="30" height="1.2" fill="#f0f000" /><rect x="810" y="188.8" width="8" height="1.2" fill="#e83030" /><rect x="818" y="184.2" width="12" height="1" fill="#e83030" /><rect x="830" y="184.2" width="10" height="1" fill="#8cc83c" /><rect x="840" y="184.2" width="30" height="1" fill="#8cc83c" /><rect x="870" y="184.2" width="20" height="1" fill="#e83030" /><rect x="890" y="184.2" width="10" height="1" fill="#e83030" /><rect x="910" y="184.2" width="10" height="1" fill="#8cc83c" /><rect x="940" y="184.2" width="10" height="1" fill="#f0f000" /><rect x="1000" y="184.2" width="10" height="1" fill="#f0f000" /><rect x="1010" y="184.2" width="10" height="1" fill="#8cc83c" /><rect x="1020" y="184.2" width="30" height="1" fill="#f0f000" /><rect x="1050" y="184.2" width="20" height="1" fill="#e83030" /><rect x="1070" y="184.2" width="10" height="1" fill="#8cc83c" /><rect x="1090" y="184.2" width="10" height="1" fill="#8cc83c" /><rect x="1100" y="184.2" width="10" height="1" fill="#8cc83c" /><rect x="1110" y="184.2" width="10" height="1" fill="#e83030" /><rect x="1120" y="184.2" width="10" height="1" fill="#8cc83c" /><rect x="1170" y="184.2" width="30" height="1" fill="#f0f000" /><rect x="1200" y="184.2" width="20" height="1" fill="#8cc83c" /><rect x="1220" y="184.2" width="20" height="1" fill="#8cc83c" /><rect x="1240" y="184.2" width="9" height="1" fill="#f0f000" /><rect x="818" y="187.5" width="2" height="1.2" fill="#5555ee" /><rect x="820" y="187.5" width="10" height="1.2" fill="#f0f000" /><rect x="830" y="187.5" width="10" height="1.2" fill="#8cc83c" /><rect x="840" y="187.5" width="20" height="1.2" fill="#f0f000" /><rect x="860" y="187.5" width="10" height="1.2" fill="#f0f000" /><rect x="870" y="187.5" width="10" height="1.2" fill="#f0f000" /><rect x="880" y="187.5" width="20" height="1.2" fill="#f0f000" /><rect x="900" y="187.5" width="10" height="1.2" fill="#5555ee" /><rect x="910" y="187.5" width="10" height="1.2" fill="#8cc83c" /><rect x="920" y="187.5" width="10" height="1.2" fill="#8cc83c" /><rect x="930" y="187.5" width="10" height="1.2" fill="#f0f000" /><rect x="940" y="187.5" width="20" height="1.2" fill="#8cc83c" /><rect x="960" y="187.5" width="10" height="1.2" fill="#8cc83c" /><rect x="970" y="187.5" width="20" height="1.2" fill="#5555ee" /><rect x="990" y="187.5" width="20" height="1.2" fill="#f0f000" /><rect x="1010" y="187.5" width="30" height="1.2" fill="#8cc83c" /><rect x="1040" y="187.5" width="20" height="1.2" fill="#f0f000" /><rect x="1060" y="187.5" width="20" height="1.2" fill="#f0f000" /><rect x="1080" y="187.5" width="10" height="1.2" fill="#f0f000" /><rect x="1090" y="187.5" width="10" height="1.2" fill="#5555ee" /><rect x="1100" y="187.5" width="10" height="1.2" fill="#5555ee" /><rect x="1110" y="187.5" width="10" height="1.2" fill="#8cc83c" /><rect x="1120" y="187.5" width="20" height="1.2" fill="#8cc83c" /><rect x="1140" y="187.5" width="10" height="1.2" fill="#f0f000" /><rect x="1150" y="187.5" width="20" height="1.2" fill="#8cc83c" /><rect x="1170" y="187.5" width="30" height="1.2" fill="#8cc83c" /><rect x="1200" y="187.5" width="10" height="1.2" fill="#5555ee" /><rect x="1210" y="187.5" width="10" height="1.2" fill="#5555ee" /><rect x="1220" y="187.5" width="29" height="1.2" fill="#f0f000" /><rect x="818" y="189" width="2" height="0.9" fill="#8cc83c" /><rect x="840" y="189" width="10" height="0.9" fill="#8cc83c" /><rect x="850" y="189" width="20" height="0.9" fill="#8cc83c" /><rect x="910" y="189" width="20" height="0.9" fill="#8cc83c" /><rect x="930" y="189" width="20" height="0.9" fill="#8cc83c" /><rect x="950" y="189" width="10" height="0.9" fill="#8cc83c" /><rect x="960" y="189" width="10" height="0.9" fill="#8cc83c" /><rect x="970" y="189" width="20" height="0.9" fill="#f0f000" /><rect x="990" y="189" width="30" height="0.9" fill="#8cc83c" /><rect x="1020" y="189" width="10" height="0.9" fill="#f0f000" /><rect x="1030" y="189" width="10" height="0.9" fill="#f0f000" /><rect x="1040" y="189" width="10" height="0.9" fill="#8cc83c" /><rect x="1060" y="189" width="10" height="0.9" fill="#8cc83c" /><rect x="1070" y="189" width="10" height="0.9" fill="#8cc83c" /><rect x="1080" y="189" width="10" height="0.9" fill="#8cc83c" /><rect x="1130" y="189" width="10" height="0.9" fill="#8cc83c" /><rect x="1160" y="189" width="20" height="0.9" fill="#f0f000" /><rect x="1180" y="189" width="10" height="0.9" fill="#8cc83c" /><rect x="1200" y="189" width="10" height="0.9" fill="#8cc83c" /><rect x="1210" y="189" width="10" height="0.9" fill="#8cc83c" /><rect x="1230" y="189" width="10" height="0.9" fill="#8cc83c" /><rect x="1240" y="189" width="9" height="0.9" fill="#8cc83c" /><rect x="144" y="183.8" width="6" height="1" fill="#8cc83c" /><rect x="150" y="183.8" width="10" height="1" fill="#f0f000" /><rect x="160" y="183.8" width="9" height="1" fill="#f0f000" /><rect x="144" y="186.6" width="6" height="1" fill="#5555ee" /><rect x="150" y="186.6" width="10" height="1" fill="#5555ee" /><rect x="160" y="186.6" width="9" height="1" fill="#5555ee" /><rect x="144" y="188.8" width="6" height="1.2" fill="#8cc83c" /><rect x="150" y="188.8" width="10" height="1.2" fill="#8cc83c" /><rect x="160" y="188.8" width="9" height="1.2" fill="#f0f000" /><rect x="220" y="191" width="9" height="13" fill="#d8d8f2" /><rect x="280" y="191" width="9" height="13" fill="#f6f0c8" /><rect x="500" y="191" width="9" height="13" fill="#d8d8f2" /><rect x="630" y="191" width="9" height="13" fill="#f6f0c8" /><rect x="660" y="191" width="9" height="13" fill="#e2f0d6" /><rect x="750" y="191" width="9" height="13" fill="#f6d2d2" /><rect x="800" y="191" width="9" height="13" fill="#f6d2d2" /><rect x="1250" y="191" width="9" height="13" fill="#dcdcdc" /><text x="145" y="202" font-size="11" fill="#1e9fd4" text-anchor="middle" font-weight="normal" >G</text><text x="155" y="202" font-size="11" fill="#1e9fd4" text-anchor="middle" font-weight="normal" >A</text><text x="165" y="202" font-size="11" fill="#1e9fd4" text-anchor="middle" font-weight="normal" >T</text><text x="175" y="202" font-size="11" fill="#1e9fd4" text-anchor="middle" font-weight="normal" >G</text><text x="185" y="202" font-size="11" fill="#1e9fd4" text-anchor="middle" font-weight="normal" >G</text><text x="195" y="202" font-size="11" fill="#1e9fd4" text-anchor="middle" font-weight="normal" >C</text><text x="205" y="202" font-size="11" fill="#1e9fd4" text-anchor="middle" font-weight="normal" >C</text><text x="215" y="202" font-size="11" fill="#1e9fd4" text-anchor="middle" font-weight="normal" >A</text><text x="225" y="202" font-size="11" fill="#1a1a1a" text-anchor="middle" font-weight="normal" >C</text><text x="235" y="202" font-size="11" fill="#1e9fd4" text-anchor="middle" font-weight="normal" >C</text><text x="245" y="202" font-size="11" fill="#1e9fd4" text-anchor="middle" font-weight="normal" >G</text><text x="255" y="202" font-size="11" fill="#1e9fd4" text-anchor="middle" font-weight="normal" >T</text><text x="265" y="202" font-size="11" fill="#1e9fd4" text-anchor="middle" font-weight="normal" >G</text><text x="275" y="202" font-size="11" fill="#1e9fd4" text-anchor="middle" font-weight="normal" >G</text><text x="285" y="202" font-size="11" fill="#1a1a1a" text-anchor="middle" font-weight="normal" >G</text><text x="295" y="202" font-size="11" fill="#1e9fd4" text-anchor="middle" font-weight="normal" >C</text><text x="305" y="202" font-size="11" fill="#1e9fd4" text-anchor="middle" font-weight="normal" >A</text><text x="315" y="202" font-size="11" fill="#1e9fd4" text-anchor="middle" font-weight="normal" >A</text><text x="325" y="202" font-size="11" fill="#1e9fd4" text-anchor="middle" font-weight="normal" >C</text><text x="335" y="202" font-size="11" fill="#1e9fd4" text-anchor="middle" font-weight="normal" >C</text><text x="345" y="202" font-size="11" fill="#1e9fd4" text-anchor="middle" font-weight="normal" >C</text><text x="355" y="202" font-size="11" fill="#1e9fd4" text-anchor="middle" font-weight="normal" >C</text><text x="365" y="202" font-size="11" fill="#1e9fd4" text-anchor="middle" font-weight="normal" >C</text><text x="375" y="202" font-size="11" fill="#1e9fd4" text-anchor="middle" font-weight="normal" >A</text><text x="385" y="202" font-size="11" fill="#1e9fd4" text-anchor="middle" font-weight="normal" >C</text><text x="395" y="202" font-size="11" fill="#1e9fd4" text-anchor="middle" font-weight="normal" >G</text><text x="405" y="202" font-size="11" fill="#1e9fd4" text-anchor="middle" font-weight="normal" >T</text><text x="415" y="202" font-size="11" fill="#1e9fd4" text-anchor="middle" font-weight="normal" >G</text><text x="425" y="202" font-size="11" fill="#1e9fd4" text-anchor="middle" font-weight="normal" >T</text><text x="435" y="202" font-size="11" fill="#1e9fd4" text-anchor="middle" font-weight="normal" >G</text><text x="445" y="202" font-size="11" fill="#1e9fd4" text-anchor="middle" font-weight="normal" >C</text><text x="455" y="202" font-size="11" fill="#1e9fd4" text-anchor="middle" font-weight="normal" >C</text><text x="465" y="202" font-size="11" fill="#1e9fd4" text-anchor="middle" font-weight="normal" >G</text><text x="475" y="202" font-size="11" fill="#1e9fd4" text-anchor="middle" font-weight="normal" >C</text><text x="485" y="202" font-size="11" fill="#1e9fd4" text-anchor="middle" font-weight="normal" >C</text><text x="495" y="202" font-size="11" fill="#1e9fd4" text-anchor="middle" font-weight="normal" >T</text><text x="505" y="202" font-size="11" fill="#1a1a1a" text-anchor="middle" font-weight="normal" >C</text><text x="515" y="202" font-size="11" fill="#1e9fd4" text-anchor="middle" font-weight="normal" >C</text><text x="525" y="202" font-size="11" fill="#1e9fd4" text-anchor="middle" font-weight="normal" >T</text><text x="535" y="202" font-size="11" fill="#1e9fd4" text-anchor="middle" font-weight="normal" >G</text><text x="545" y="202" font-size="11" fill="#1e9fd4" text-anchor="middle" font-weight="normal" >G</text><text x="555" y="202" font-size="11" fill="#1e9fd4" text-anchor="middle" font-weight="normal" >G</text><text x="565" y="202" font-size="11" fill="#1e9fd4" text-anchor="middle" font-weight="normal" >C</text><text x="575" y="202" font-size="11" fill="#1e9fd4" text-anchor="middle" font-weight="normal" >A</text><text x="585" y="202" font-size="11" fill="#1e9fd4" text-anchor="middle" font-weight="normal" >T</text><text x="595" y="202" font-size="11" fill="#1e9fd4" text-anchor="middle" font-weight="normal" >C</text><text x="605" y="202" font-size="11" fill="#1e9fd4" text-anchor="middle" font-weight="normal" >T</text><text x="615" y="202" font-size="11" fill="#1e9fd4" text-anchor="middle" font-weight="normal" >G</text><text x="625" y="202" font-size="11" fill="#1e9fd4" text-anchor="middle" font-weight="normal" >C</text><text x="635" y="202" font-size="11" fill="#1a1a1a" text-anchor="middle" font-weight="normal" >G</text><text x="645" y="202" font-size="11" fill="#1e9fd4" text-anchor="middle" font-weight="normal" >T</text><text x="655" y="202" font-size="11" fill="#1e9fd4" text-anchor="middle" font-weight="normal" >C</text><text x="665" y="202" font-size="11" fill="#1a1a1a" text-anchor="middle" font-weight="normal" >T</text><text x="675" y="202" font-size="11" fill="#1e9fd4" text-anchor="middle" font-weight="normal" >C</text><text x="685" y="202" font-size="11" fill="#1e9fd4" text-anchor="middle" font-weight="normal" >C</text><text x="695" y="202" font-size="11" fill="#1e9fd4" text-anchor="middle" font-weight="normal" >T</text><text x="705" y="202" font-size="11" fill="#1e9fd4" text-anchor="middle" font-weight="normal" >C</text><text x="715" y="202" font-size="11" fill="#1e9fd4" text-anchor="middle" font-weight="normal" >C</text><text x="725" y="202" font-size="11" fill="#1e9fd4" text-anchor="middle" font-weight="normal" >A</text><text x="735" y="202" font-size="11" fill="#1e9fd4" text-anchor="middle" font-weight="normal" >C</text><text x="745" y="202" font-size="11" fill="#1e9fd4" text-anchor="middle" font-weight="normal" >C</text><text x="755" y="202" font-size="11" fill="#1a1a1a" text-anchor="middle" font-weight="normal" >A</text><text x="765" y="202" font-size="11" fill="#1e9fd4" text-anchor="middle" font-weight="normal" >T</text><text x="775" y="202" font-size="11" fill="#1e9fd4" text-anchor="middle" font-weight="normal" >G</text><text x="785" y="202" font-size="11" fill="#1e9fd4" text-anchor="middle" font-weight="normal" >C</text><text x="795" y="202" font-size="11" fill="#1e9fd4" text-anchor="middle" font-weight="normal" >A</text><text x="805" y="202" font-size="11" fill="#1a1a1a" text-anchor="middle" font-weight="normal" >A</text><text x="815" y="202" font-size="11" fill="#1e9fd4" text-anchor="middle" font-weight="normal" >C</text><text x="825" y="202" font-size="11" fill="#a6d6ec" text-anchor="middle" font-weight="normal" >T</text><text x="835" y="202" font-size="11" fill="#a6d6ec" text-anchor="middle" font-weight="normal" >C</text><text x="845" y="202" font-size="11" fill="#a6d6ec" text-anchor="middle" font-weight="normal" >A</text><text x="855" y="202" font-size="11" fill="#a6d6ec" text-anchor="middle" font-weight="normal" >T</text><text x="865" y="202" font-size="11" fill="#a6d6ec" text-anchor="middle" font-weight="normal" >C</text><text x="875" y="202" font-size="11" fill="#a6d6ec" text-anchor="middle" font-weight="normal" >A</text><text x="885" y="202" font-size="11" fill="#a6d6ec" text-anchor="middle" font-weight="normal" >C</text><text x="895" y="202" font-size="11" fill="#a6d6ec" text-anchor="middle" font-weight="normal" >G</text><text x="905" y="202" font-size="11" fill="#a6d6ec" text-anchor="middle" font-weight="normal" >C</text><text x="915" y="202" font-size="11" fill="#a6d6ec" text-anchor="middle" font-weight="normal" >A</text><text x="925" y="202" font-size="11" fill="#a6d6ec" text-anchor="middle" font-weight="normal" >G</text><text x="935" y="202" font-size="11" fill="#a6d6ec" text-anchor="middle" font-weight="normal" >C</text><text x="945" y="202" font-size="11" fill="#a6d6ec" text-anchor="middle" font-weight="normal" >T</text><text x="955" y="202" font-size="11" fill="#a6d6ec" text-anchor="middle" font-weight="normal" >C</text><text x="965" y="202" font-size="11" fill="#a6d6ec" text-anchor="middle" font-weight="normal" >A</text><text x="975" y="202" font-size="11" fill="#a6d6ec" text-anchor="middle" font-weight="normal" >T</text><text x="985" y="202" font-size="11" fill="#a6d6ec" text-anchor="middle" font-weight="normal" >G</text><text x="1065" y="202" font-size="11" fill="#a6d6ec" text-anchor="middle" font-weight="normal" >G</text><text x="1075" y="202" font-size="11" fill="#a6d6ec" text-anchor="middle" font-weight="normal" >C</text><text x="1085" y="202" font-size="11" fill="#a6d6ec" text-anchor="middle" font-weight="normal" >T</text><text x="1095" y="202" font-size="11" fill="#a6d6ec" text-anchor="middle" font-weight="normal" >G</text><text x="1105" y="202" font-size="11" fill="#a6d6ec" text-anchor="middle" font-weight="normal" >C</text><text x="1115" y="202" font-size="11" fill="#a6d6ec" text-anchor="middle" font-weight="normal" >C</text><text x="1125" y="202" font-size="11" fill="#a6d6ec" text-anchor="middle" font-weight="normal" >T</text><text x="1135" y="202" font-size="11" fill="#a6d6ec" text-anchor="middle" font-weight="normal" >C</text><text x="1145" y="202" font-size="11" fill="#a6d6ec" text-anchor="middle" font-weight="normal" >C</text><text x="1155" y="202" font-size="11" fill="#a6d6ec" text-anchor="middle" font-weight="normal" >T</text><text x="1165" y="202" font-size="11" fill="#a6d6ec" text-anchor="middle" font-weight="normal" >G</text><text x="1175" y="202" font-size="11" fill="#a6d6ec" text-anchor="middle" font-weight="normal" >G</text><text x="1185" y="202" font-size="11" fill="#a6d6ec" text-anchor="middle" font-weight="normal" >A</text><text x="1195" y="202" font-size="11" fill="#a6d6ec" text-anchor="middle" font-weight="normal" >C</text><text x="1205" y="202" font-size="11" fill="#a6d6ec" text-anchor="middle" font-weight="normal" >T</text><text x="1215" y="202" font-size="11" fill="#a6d6ec" text-anchor="middle" font-weight="normal" >A</text><text x="1225" y="202" font-size="11" fill="#a6d6ec" text-anchor="middle" font-weight="normal" >T</text><text x="1235" y="202" font-size="11" fill="#a6d6ec" text-anchor="middle" font-weight="normal" >G</text><text x="1245" y="202" font-size="11" fill="#a6d6ec" text-anchor="middle" font-weight="normal" >T</text><text x="1255" y="202" font-size="11" fill="#1a1a1a" text-anchor="middle" font-weight="normal" >M</text><text x="1265" y="202" font-size="11" fill="#1e9fd4" text-anchor="middle" font-weight="normal" >C</text><text x="1275" y="202" font-size="11" fill="#1e9fd4" text-anchor="middle" font-weight="normal" >G</text><text x="1285" y="202" font-size="11" fill="#1e9fd4" text-anchor="middle" font-weight="normal" >G</text><text x="1295" y="202" font-size="11" fill="#1e9fd4" text-anchor="middle" font-weight="normal" >C</text><rect x="1250" y="203.6" width="9" height="13" fill="#dcdcdc" /><text x="145" y="214.6" font-size="11" fill="#1c12c8" text-anchor="middle" font-weight="normal" >G</text><text x="155" y="214.6" font-size="11" fill="#1c12c8" text-anchor="middle" font-weight="normal" >A</text><text x="165" y="214.6" font-size="11" fill="#1c12c8" text-anchor="middle" font-weight="normal" >T</text><text x="175" y="214.6" font-size="11" fill="#1c12c8" text-anchor="middle" font-weight="normal" >G</text><text x="185" y="214.6" font-size="11" fill="#1c12c8" text-anchor="middle" font-weight="normal" >G</text><text x="195" y="214.6" font-size="11" fill="#1c12c8" text-anchor="middle" font-weight="normal" >C</text><text x="205" y="214.6" font-size="11" fill="#1c12c8" text-anchor="middle" font-weight="normal" >C</text><text x="215" y="214.6" font-size="11" fill="#1c12c8" text-anchor="middle" font-weight="normal" >A</text><text x="225" y="214.6" font-size="11" fill="#1c12c8" text-anchor="middle" font-weight="normal" >G</text><text x="235" y="214.6" font-size="11" fill="#1c12c8" text-anchor="middle" font-weight="normal" >C</text><text x="245" y="214.6" font-size="11" fill="#1c12c8" text-anchor="middle" font-weight="normal" >G</text><text x="255" y="214.6" font-size="11" fill="#1c12c8" text-anchor="middle" font-weight="normal" >T</text><text x="265" y="214.6" font-size="11" fill="#1c12c8" text-anchor="middle" font-weight="normal" >G</text><text x="275" y="214.6" font-size="11" fill="#1c12c8" text-anchor="middle" font-weight="normal" >G</text><text x="285" y="214.6" font-size="11" fill="#1c12c8" text-anchor="middle" font-weight="normal" >A</text><text x="295" y="214.6" font-size="11" fill="#1c12c8" text-anchor="middle" font-weight="normal" >C</text><text x="305" y="214.6" font-size="11" fill="#1c12c8" text-anchor="middle" font-weight="normal" >A</text><text x="315" y="214.6" font-size="11" fill="#1c12c8" text-anchor="middle" font-weight="normal" >A</text><text x="325" y="214.6" font-size="11" fill="#1c12c8" text-anchor="middle" font-weight="normal" >C</text><text x="335" y="214.6" font-size="11" fill="#1c12c8" text-anchor="middle" font-weight="normal" >C</text><text x="345" y="214.6" font-size="11" fill="#1c12c8" text-anchor="middle" font-weight="normal" >C</text><text x="355" y="214.6" font-size="11" fill="#1c12c8" text-anchor="middle" font-weight="normal" >C</text><text x="365" y="214.6" font-size="11" fill="#1c12c8" text-anchor="middle" font-weight="normal" >C</text><text x="375" y="214.6" font-size="11" fill="#1c12c8" text-anchor="middle" font-weight="normal" >A</text><text x="385" y="214.6" font-size="11" fill="#1c12c8" text-anchor="middle" font-weight="normal" >C</text><text x="395" y="214.6" font-size="11" fill="#1c12c8" text-anchor="middle" font-weight="normal" >G</text><text x="405" y="214.6" font-size="11" fill="#1c12c8" text-anchor="middle" font-weight="normal" >T</text><text x="415" y="214.6" font-size="11" fill="#1c12c8" text-anchor="middle" font-weight="normal" >G</text><text x="425" y="214.6" font-size="11" fill="#1c12c8" text-anchor="middle" font-weight="normal" >T</text><text x="435" y="214.6" font-size="11" fill="#1c12c8" text-anchor="middle" font-weight="normal" >G</text><text x="445" y="214.6" font-size="11" fill="#1c12c8" text-anchor="middle" font-weight="normal" >C</text><text x="455" y="214.6" font-size="11" fill="#1c12c8" text-anchor="middle" font-weight="normal" >C</text><text x="465" y="214.6" font-size="11" fill="#1c12c8" text-anchor="middle" font-weight="normal" >G</text><text x="475" y="214.6" font-size="11" fill="#1c12c8" text-anchor="middle" font-weight="normal" >C</text><text x="485" y="214.6" font-size="11" fill="#1c12c8" text-anchor="middle" font-weight="normal" >C</text><text x="495" y="214.6" font-size="11" fill="#1c12c8" text-anchor="middle" font-weight="normal" >T</text><text x="505" y="214.6" font-size="11" fill="#1c12c8" text-anchor="middle" font-weight="normal" >G</text><text x="515" y="214.6" font-size="11" fill="#1c12c8" text-anchor="middle" font-weight="normal" >C</text><text x="525" y="214.6" font-size="11" fill="#1c12c8" text-anchor="middle" font-weight="normal" >T</text><text x="535" y="214.6" font-size="11" fill="#1c12c8" text-anchor="middle" font-weight="normal" >G</text><text x="545" y="214.6" font-size="11" fill="#1c12c8" text-anchor="middle" font-weight="normal" >G</text><text x="555" y="214.6" font-size="11" fill="#1c12c8" text-anchor="middle" font-weight="normal" >G</text><text x="565" y="214.6" font-size="11" fill="#1c12c8" text-anchor="middle" font-weight="normal" >C</text><text x="575" y="214.6" font-size="11" fill="#1c12c8" text-anchor="middle" font-weight="normal" >A</text><text x="585" y="214.6" font-size="11" fill="#1c12c8" text-anchor="middle" font-weight="normal" >T</text><text x="595" y="214.6" font-size="11" fill="#1c12c8" text-anchor="middle" font-weight="normal" >C</text><text x="605" y="214.6" font-size="11" fill="#1c12c8" text-anchor="middle" font-weight="normal" >T</text><text x="615" y="214.6" font-size="11" fill="#1c12c8" text-anchor="middle" font-weight="normal" >G</text><text x="625" y="214.6" font-size="11" fill="#1c12c8" text-anchor="middle" font-weight="normal" >C</text><text x="635" y="214.6" font-size="11" fill="#1c12c8" text-anchor="middle" font-weight="normal" >C</text><text x="645" y="214.6" font-size="11" fill="#1c12c8" text-anchor="middle" font-weight="normal" >T</text><text x="655" y="214.6" font-size="11" fill="#1c12c8" text-anchor="middle" font-weight="normal" >C</text><text x="665" y="214.6" font-size="11" fill="#1c12c8" text-anchor="middle" font-weight="normal" >A</text><text x="675" y="214.6" font-size="11" fill="#1c12c8" text-anchor="middle" font-weight="normal" >C</text><text x="685" y="214.6" font-size="11" fill="#1c12c8" text-anchor="middle" font-weight="normal" >C</text><text x="695" y="214.6" font-size="11" fill="#1c12c8" text-anchor="middle" font-weight="normal" >T</text><text x="705" y="214.6" font-size="11" fill="#1c12c8" text-anchor="middle" font-weight="normal" >C</text><text x="715" y="214.6" font-size="11" fill="#1c12c8" text-anchor="middle" font-weight="normal" >C</text><text x="725" y="214.6" font-size="11" fill="#1c12c8" text-anchor="middle" font-weight="normal" >A</text><text x="735" y="214.6" font-size="11" fill="#1c12c8" text-anchor="middle" font-weight="normal" >C</text><text x="745" y="214.6" font-size="11" fill="#1c12c8" text-anchor="middle" font-weight="normal" >C</text><text x="755" y="214.6" font-size="11" fill="#1c12c8" text-anchor="middle" font-weight="normal" >G</text><text x="765" y="214.6" font-size="11" fill="#1c12c8" text-anchor="middle" font-weight="normal" >T</text><text x="775" y="214.6" font-size="11" fill="#1c12c8" text-anchor="middle" font-weight="normal" >G</text><text x="785" y="214.6" font-size="11" fill="#1c12c8" text-anchor="middle" font-weight="normal" >C</text><text x="795" y="214.6" font-size="11" fill="#1c12c8" text-anchor="middle" font-weight="normal" >A</text><text x="805" y="214.6" font-size="11" fill="#1c12c8" text-anchor="middle" font-weight="normal" >G</text><text x="815" y="214.6" font-size="11" fill="#1c12c8" text-anchor="middle" font-weight="normal" >C</text><text x="825" y="214.6" font-size="11" fill="#a8a8ec" text-anchor="middle" font-weight="normal" >T</text><text x="835" y="214.6" font-size="11" fill="#a8a8ec" text-anchor="middle" font-weight="normal" >C</text><text x="845" y="214.6" font-size="11" fill="#a8a8ec" text-anchor="middle" font-weight="normal" >A</text><text x="855" y="214.6" font-size="11" fill="#a8a8ec" text-anchor="middle" font-weight="normal" >T</text><text x="865" y="214.6" font-size="11" fill="#a8a8ec" text-anchor="middle" font-weight="normal" >C</text><text x="875" y="214.6" font-size="11" fill="#a8a8ec" text-anchor="middle" font-weight="normal" >A</text><text x="885" y="214.6" font-size="11" fill="#a8a8ec" text-anchor="middle" font-weight="normal" >C</text><text x="895" y="214.6" font-size="11" fill="#a8a8ec" text-anchor="middle" font-weight="normal" >G</text><text x="905" y="214.6" font-size="11" fill="#a8a8ec" text-anchor="middle" font-weight="normal" >C</text><text x="915" y="214.6" font-size="11" fill="#a8a8ec" text-anchor="middle" font-weight="normal" >A</text><text x="925" y="214.6" font-size="11" fill="#a8a8ec" text-anchor="middle" font-weight="normal" >G</text><text x="935" y="214.6" font-size="11" fill="#a8a8ec" text-anchor="middle" font-weight="normal" >C</text><text x="945" y="214.6" font-size="11" fill="#a8a8ec" text-anchor="middle" font-weight="normal" >T</text><text x="955" y="214.6" font-size="11" fill="#a8a8ec" text-anchor="middle" font-weight="normal" >C</text><text x="965" y="214.6" font-size="11" fill="#a8a8ec" text-anchor="middle" font-weight="normal" >A</text><text x="975" y="214.6" font-size="11" fill="#a8a8ec" text-anchor="middle" font-weight="normal" >T</text><text x="985" y="214.6" font-size="11" fill="#a8a8ec" text-anchor="middle" font-weight="normal" >G</text><text x="1065" y="214.6" font-size="11" fill="#a6d6ec" text-anchor="middle" font-weight="normal" >G</text><text x="1075" y="214.6" font-size="11" fill="#a6d6ec" text-anchor="middle" font-weight="normal" >C</text><text x="1085" y="214.6" font-size="11" fill="#a6d6ec" text-anchor="middle" font-weight="normal" >T</text><text x="1095" y="214.6" font-size="11" fill="#a6d6ec" text-anchor="middle" font-weight="normal" >G</text><text x="1105" y="214.6" font-size="11" fill="#a6d6ec" text-anchor="middle" font-weight="normal" >T</text><text x="1115" y="214.6" font-size="11" fill="#a6d6ec" text-anchor="middle" font-weight="normal" >C</text><text x="1125" y="214.6" font-size="11" fill="#a6d6ec" text-anchor="middle" font-weight="normal" >T</text><text x="1135" y="214.6" font-size="11" fill="#a6d6ec" text-anchor="middle" font-weight="normal" >C</text><text x="1145" y="214.6" font-size="11" fill="#a6d6ec" text-anchor="middle" font-weight="normal" >C</text><text x="1155" y="214.6" font-size="11" fill="#a6d6ec" text-anchor="middle" font-weight="normal" >T</text><text x="1165" y="214.6" font-size="11" fill="#a6d6ec" text-anchor="middle" font-weight="normal" >G</text><text x="1175" y="214.6" font-size="11" fill="#a6d6ec" text-anchor="middle" font-weight="normal" >G</text><text x="1185" y="214.6" font-size="11" fill="#a6d6ec" text-anchor="middle" font-weight="normal" >A</text><text x="1195" y="214.6" font-size="11" fill="#a6d6ec" text-anchor="middle" font-weight="normal" >C</text><text x="1205" y="214.6" font-size="11" fill="#a6d6ec" text-anchor="middle" font-weight="normal" >T</text><text x="1215" y="214.6" font-size="11" fill="#a6d6ec" text-anchor="middle" font-weight="normal" >A</text><text x="1225" y="214.6" font-size="11" fill="#a6d6ec" text-anchor="middle" font-weight="normal" >T</text><text x="1235" y="214.6" font-size="11" fill="#a6d6ec" text-anchor="middle" font-weight="normal" >G</text><text x="1245" y="214.6" font-size="11" fill="#a6d6ec" text-anchor="middle" font-weight="normal" >T</text><text x="1255" y="214.6" font-size="11" fill="#1a1a1a" text-anchor="middle" font-weight="normal" >M</text><text x="1265" y="214.6" font-size="11" fill="#1e9fd4" text-anchor="middle" font-weight="normal" >C</text><text x="1275" y="214.6" font-size="11" fill="#1e9fd4" text-anchor="middle" font-weight="normal" >G</text><text x="1285" y="214.6" font-size="11" fill="#1e9fd4" text-anchor="middle" font-weight="normal" >G</text><text x="1295" y="214.6" font-size="11" fill="#1e9fd4" text-anchor="middle" font-weight="normal" >C</text><rect x="160" y="216.2" width="9" height="13" fill="#dcdcdc" /><rect x="1250" y="216.2" width="9" height="13" fill="#dcdcdc" /><text x="145" y="227.2" font-size="11" fill="#1e9fd4" text-anchor="middle" font-weight="normal" >G</text><text x="155" y="227.2" font-size="11" fill="#1e9fd4" text-anchor="middle" font-weight="normal" >A</text><text x="165" y="227.2" font-size="11" fill="#1a1a1a" text-anchor="middle" font-weight="normal" >Y</text><text x="175" y="227.2" font-size="11" fill="#1e9fd4" text-anchor="middle" font-weight="normal" >G</text><text x="185" y="227.2" font-size="11" fill="#1e9fd4" text-anchor="middle" font-weight="normal" >G</text><text x="195" y="227.2" font-size="11" fill="#1e9fd4" text-anchor="middle" font-weight="normal" >C</text><text x="205" y="227.2" font-size="11" fill="#1e9fd4" text-anchor="middle" font-weight="normal" >C</text><text x="215" y="227.2" font-size="11" fill="#1e9fd4" text-anchor="middle" font-weight="normal" >A</text><text x="225" y="227.2" font-size="11" fill="#1e9fd4" text-anchor="middle" font-weight="normal" >G</text><text x="235" y="227.2" font-size="11" fill="#1e9fd4" text-anchor="middle" font-weight="normal" >C</text><text x="245" y="227.2" font-size="11" fill="#1e9fd4" text-anchor="middle" font-weight="normal" >G</text><text x="255" y="227.2" font-size="11" fill="#1e9fd4" text-anchor="middle" font-weight="normal" >T</text><text x="265" y="227.2" font-size="11" fill="#1e9fd4" text-anchor="middle" font-weight="normal" >G</text><text x="275" y="227.2" font-size="11" fill="#1e9fd4" text-anchor="middle" font-weight="normal" >G</text><text x="285" y="227.2" font-size="11" fill="#1e9fd4" text-anchor="middle" font-weight="normal" >A</text><text x="295" y="227.2" font-size="11" fill="#1e9fd4" text-anchor="middle" font-weight="normal" >C</text><text x="305" y="227.2" font-size="11" fill="#1e9fd4" text-anchor="middle" font-weight="normal" >A</text><text x="315" y="227.2" font-size="11" fill="#1e9fd4" text-anchor="middle" font-weight="normal" >A</text><text x="325" y="227.2" font-size="11" fill="#1e9fd4" text-anchor="middle" font-weight="normal" >C</text><text x="335" y="227.2" font-size="11" fill="#1e9fd4" text-anchor="middle" font-weight="normal" >C</text><text x="345" y="227.2" font-size="11" fill="#1e9fd4" text-anchor="middle" font-weight="normal" >C</text><text x="355" y="227.2" font-size="11" fill="#1e9fd4" text-anchor="middle" font-weight="normal" >C</text><text x="365" y="227.2" font-size="11" fill="#1e9fd4" text-anchor="middle" font-weight="normal" >C</text><text x="375" y="227.2" font-size="11" fill="#1e9fd4" text-anchor="middle" font-weight="normal" >A</text><text x="385" y="227.2" font-size="11" fill="#1e9fd4" text-anchor="middle" font-weight="normal" >C</text><text x="395" y="227.2" font-size="11" fill="#1e9fd4" text-anchor="middle" font-weight="normal" >G</text><text x="405" y="227.2" font-size="11" fill="#1e9fd4" text-anchor="middle" font-weight="normal" >T</text><text x="415" y="227.2" font-size="11" fill="#1e9fd4" text-anchor="middle" font-weight="normal" >G</text><text x="425" y="227.2" font-size="11" fill="#1e9fd4" text-anchor="middle" font-weight="normal" >T</text><text x="435" y="227.2" font-size="11" fill="#1e9fd4" text-anchor="middle" font-weight="normal" >G</text><text x="445" y="227.2" font-size="11" fill="#1e9fd4" text-anchor="middle" font-weight="normal" >C</text><text x="455" y="227.2" font-size="11" fill="#1e9fd4" text-anchor="middle" font-weight="normal" >C</text><text x="465" y="227.2" font-size="11" fill="#1e9fd4" text-anchor="middle" font-weight="normal" >G</text><text x="475" y="227.2" font-size="11" fill="#1e9fd4" text-anchor="middle" font-weight="normal" >C</text><text x="485" y="227.2" font-size="11" fill="#1e9fd4" text-anchor="middle" font-weight="normal" >C</text><text x="495" y="227.2" font-size="11" fill="#1e9fd4" text-anchor="middle" font-weight="normal" >T</text><text x="505" y="227.2" font-size="11" fill="#1e9fd4" text-anchor="middle" font-weight="normal" >G</text><text x="515" y="227.2" font-size="11" fill="#1e9fd4" text-anchor="middle" font-weight="normal" >C</text><text x="525" y="227.2" font-size="11" fill="#1e9fd4" text-anchor="middle" font-weight="normal" >T</text><text x="535" y="227.2" font-size="11" fill="#1e9fd4" text-anchor="middle" font-weight="normal" >G</text><text x="545" y="227.2" font-size="11" fill="#1e9fd4" text-anchor="middle" font-weight="normal" >G</text><text x="555" y="227.2" font-size="11" fill="#1e9fd4" text-anchor="middle" font-weight="normal" >G</text><text x="565" y="227.2" font-size="11" fill="#1e9fd4" text-anchor="middle" font-weight="normal" >C</text><text x="575" y="227.2" font-size="11" fill="#1e9fd4" text-anchor="middle" font-weight="normal" >A</text><text x="585" y="227.2" font-size="11" fill="#1e9fd4" text-anchor="middle" font-weight="normal" >T</text><text x="595" y="227.2" font-size="11" fill="#1e9fd4" text-anchor="middle" font-weight="normal" >C</text><text x="605" y="227.2" font-size="11" fill="#1e9fd4" text-anchor="middle" font-weight="normal" >T</text><text x="615" y="227.2" font-size="11" fill="#1e9fd4" text-anchor="middle" font-weight="normal" >G</text><text x="625" y="227.2" font-size="11" fill="#1e9fd4" text-anchor="middle" font-weight="normal" >C</text><text x="635" y="227.2" font-size="11" fill="#1e9fd4" text-anchor="middle" font-weight="normal" >C</text><text x="645" y="227.2" font-size="11" fill="#1e9fd4" text-anchor="middle" font-weight="normal" >T</text><text x="655" y="227.2" font-size="11" fill="#1e9fd4" text-anchor="middle" font-weight="normal" >C</text><text x="665" y="227.2" font-size="11" fill="#1e9fd4" text-anchor="middle" font-weight="normal" >A</text><text x="675" y="227.2" font-size="11" fill="#1e9fd4" text-anchor="middle" font-weight="normal" >C</text><text x="685" y="227.2" font-size="11" fill="#1e9fd4" text-anchor="middle" font-weight="normal" >C</text><text x="695" y="227.2" font-size="11" fill="#1e9fd4" text-anchor="middle" font-weight="normal" >T</text><text x="705" y="227.2" font-size="11" fill="#1e9fd4" text-anchor="middle" font-weight="normal" >C</text><text x="715" y="227.2" font-size="11" fill="#1e9fd4" text-anchor="middle" font-weight="normal" >C</text><text x="725" y="227.2" font-size="11" fill="#1e9fd4" text-anchor="middle" font-weight="normal" >A</text><text x="735" y="227.2" font-size="11" fill="#1e9fd4" text-anchor="middle" font-weight="normal" >C</text><text x="745" y="227.2" font-size="11" fill="#1e9fd4" text-anchor="middle" font-weight="normal" >C</text><text x="755" y="227.2" font-size="11" fill="#1e9fd4" text-anchor="middle" font-weight="normal" >G</text><text x="765" y="227.2" font-size="11" fill="#1e9fd4" text-anchor="middle" font-weight="normal" >T</text><text x="775" y="227.2" font-size="11" fill="#1e9fd4" text-anchor="middle" font-weight="normal" >G</text><text x="785" y="227.2" font-size="11" fill="#1e9fd4" text-anchor="middle" font-weight="normal" >C</text><text x="795" y="227.2" font-size="11" fill="#1e9fd4" text-anchor="middle" font-weight="normal" >A</text><text x="805" y="227.2" font-size="11" fill="#1e9fd4" text-anchor="middle" font-weight="normal" >G</text><text x="815" y="227.2" font-size="11" fill="#1e9fd4" text-anchor="middle" font-weight="normal" >C</text><text x="825" y="227.2" font-size="11" fill="#a6d6ec" text-anchor="middle" font-weight="normal" >T</text><text x="835" y="227.2" font-size="11" fill="#a6d6ec" text-anchor="middle" font-weight="normal" >C</text><text x="845" y="227.2" font-size="11" fill="#a6d6ec" text-anchor="middle" font-weight="normal" >A</text><text x="855" y="227.2" font-size="11" fill="#a6d6ec" text-anchor="middle" font-weight="normal" >T</text><text x="865" y="227.2" font-size="11" fill="#a6d6ec" text-anchor="middle" font-weight="normal" >C</text><text x="875" y="227.2" font-size="11" fill="#a6d6ec" text-anchor="middle" font-weight="normal" >A</text><text x="885" y="227.2" font-size="11" fill="#a6d6ec" text-anchor="middle" font-weight="normal" >C</text><text x="895" y="227.2" font-size="11" fill="#a6d6ec" text-anchor="middle" font-weight="normal" >G</text><text x="905" y="227.2" font-size="11" fill="#a6d6ec" text-anchor="middle" font-weight="normal" >C</text><text x="915" y="227.2" font-size="11" fill="#a6d6ec" text-anchor="middle" font-weight="normal" >A</text><text x="925" y="227.2" font-size="11" fill="#a6d6ec" text-anchor="middle" font-weight="normal" >G</text><text x="935" y="227.2" font-size="11" fill="#a6d6ec" text-anchor="middle" font-weight="normal" >C</text><text x="945" y="227.2" font-size="11" fill="#a6d6ec" text-anchor="middle" font-weight="normal" >T</text><text x="955" y="227.2" font-size="11" fill="#a6d6ec" text-anchor="middle" font-weight="normal" >C</text><text x="965" y="227.2" font-size="11" fill="#a6d6ec" text-anchor="middle" font-weight="normal" >A</text><text x="975" y="227.2" font-size="11" fill="#a6d6ec" text-anchor="middle" font-weight="normal" >T</text><text x="985" y="227.2" font-size="11" fill="#a6d6ec" text-anchor="middle" font-weight="normal" >G</text><text x="1065" y="227.2" font-size="11" fill="#a6d6ec" text-anchor="middle" font-weight="normal" >G</text><text x="1075" y="227.2" font-size="11" fill="#a6d6ec" text-anchor="middle" font-weight="normal" >C</text><text x="1085" y="227.2" font-size="11" fill="#a6d6ec" text-anchor="middle" font-weight="normal" >T</text><text x="1095" y="227.2" font-size="11" fill="#a6d6ec" text-anchor="middle" font-weight="normal" >G</text><text x="1105" y="227.2" font-size="11" fill="#a6d6ec" text-anchor="middle" font-weight="normal" >C</text><text x="1115" y="227.2" font-size="11" fill="#a6d6ec" text-anchor="middle" font-weight="normal" >C</text><text x="1125" y="227.2" font-size="11" fill="#a6d6ec" text-anchor="middle" font-weight="normal" >T</text><text x="1135" y="227.2" font-size="11" fill="#a6d6ec" text-anchor="middle" font-weight="normal" >C</text><text x="1145" y="227.2" font-size="11" fill="#a6d6ec" text-anchor="middle" font-weight="normal" >C</text><text x="1155" y="227.2" font-size="11" fill="#a6d6ec" text-anchor="middle" font-weight="normal" >T</text><text x="1165" y="227.2" font-size="11" fill="#a6d6ec" text-anchor="middle" font-weight="normal" >G</text><text x="1175" y="227.2" font-size="11" fill="#a6d6ec" text-anchor="middle" font-weight="normal" >G</text><text x="1185" y="227.2" font-size="11" fill="#a6d6ec" text-anchor="middle" font-weight="normal" >A</text><text x="1195" y="227.2" font-size="11" fill="#a6d6ec" text-anchor="middle" font-weight="normal" >C</text><text x="1205" y="227.2" font-size="11" fill="#a6d6ec" text-anchor="middle" font-weight="normal" >T</text><text x="1215" y="227.2" font-size="11" fill="#a6d6ec" text-anchor="middle" font-weight="normal" >A</text><text x="1225" y="227.2" font-size="11" fill="#a6d6ec" text-anchor="middle" font-weight="normal" >T</text><text x="1235" y="227.2" font-size="11" fill="#a6d6ec" text-anchor="middle" font-weight="normal" >G</text><text x="1245" y="227.2" font-size="11" fill="#a6d6ec" text-anchor="middle" font-weight="normal" >T</text><text x="1255" y="227.2" font-size="11" fill="#1a1a1a" text-anchor="middle" font-weight="normal" >M</text><text x="1265" y="227.2" font-size="11" fill="#1e9fd4" text-anchor="middle" font-weight="normal" >C</text><text x="1275" y="227.2" font-size="11" fill="#1e9fd4" text-anchor="middle" font-weight="normal" >G</text><text x="1285" y="227.2" font-size="11" fill="#1e9fd4" text-anchor="middle" font-weight="normal" >G</text><text x="1295" y="227.2" font-size="11" fill="#1e9fd4" text-anchor="middle" font-weight="normal" >C</text><rect x="1250" y="228.8" width="9" height="13" fill="#dcdcdc" /><text x="145" y="239.8" font-size="11" fill="#1e9fd4" text-anchor="middle" font-weight="normal" >G</text><text x="155" y="239.8" font-size="11" fill="#1e9fd4" text-anchor="middle" font-weight="normal" >A</text><text x="165" y="239.8" font-size="11" fill="#1e9fd4" text-anchor="middle" font-weight="normal" >T</text><text x="175" y="239.8" font-size="11" fill="#1e9fd4" text-anchor="middle" font-weight="normal" >G</text><text x="185" y="239.8" font-size="11" fill="#1e9fd4" text-anchor="middle" font-weight="normal" >G</text><text x="195" y="239.8" font-size="11" fill="#1e9fd4" text-anchor="middle" font-weight="normal" >C</text><text x="205" y="239.8" font-size="11" fill="#1e9fd4" text-anchor="middle" font-weight="normal" >C</text><text x="215" y="239.8" font-size="11" fill="#1e9fd4" text-anchor="middle" font-weight="normal" >A</text><text x="225" y="239.8" font-size="11" fill="#1e9fd4" text-anchor="middle" font-weight="normal" >G</text><text x="235" y="239.8" font-size="11" fill="#1e9fd4" text-anchor="middle" font-weight="normal" >C</text><text x="245" y="239.8" font-size="11" fill="#1e9fd4" text-anchor="middle" font-weight="normal" >G</text><text x="255" y="239.8" font-size="11" fill="#1e9fd4" text-anchor="middle" font-weight="normal" >T</text><text x="265" y="239.8" font-size="11" fill="#1e9fd4" text-anchor="middle" font-weight="normal" >G</text><text x="275" y="239.8" font-size="11" fill="#1e9fd4" text-anchor="middle" font-weight="normal" >G</text><text x="285" y="239.8" font-size="11" fill="#1e9fd4" text-anchor="middle" font-weight="normal" >A</text><text x="295" y="239.8" font-size="11" fill="#1e9fd4" text-anchor="middle" font-weight="normal" >C</text><text x="305" y="239.8" font-size="11" fill="#1e9fd4" text-anchor="middle" font-weight="normal" >A</text><text x="315" y="239.8" font-size="11" fill="#1e9fd4" text-anchor="middle" font-weight="normal" >A</text><text x="325" y="239.8" font-size="11" fill="#1e9fd4" text-anchor="middle" font-weight="normal" >C</text><text x="335" y="239.8" font-size="11" fill="#1e9fd4" text-anchor="middle" font-weight="normal" >C</text><text x="345" y="239.8" font-size="11" fill="#1e9fd4" text-anchor="middle" font-weight="normal" >C</text><text x="355" y="239.8" font-size="11" fill="#1e9fd4" text-anchor="middle" font-weight="normal" >C</text><text x="365" y="239.8" font-size="11" fill="#1e9fd4" text-anchor="middle" font-weight="normal" >C</text><text x="375" y="239.8" font-size="11" fill="#1e9fd4" text-anchor="middle" font-weight="normal" >A</text><text x="385" y="239.8" font-size="11" fill="#1e9fd4" text-anchor="middle" font-weight="normal" >C</text><text x="395" y="239.8" font-size="11" fill="#1e9fd4" text-anchor="middle" font-weight="normal" >G</text><text x="405" y="239.8" font-size="11" fill="#1e9fd4" text-anchor="middle" font-weight="normal" >T</text><text x="415" y="239.8" font-size="11" fill="#1e9fd4" text-anchor="middle" font-weight="normal" >G</text><text x="425" y="239.8" font-size="11" fill="#1e9fd4" text-anchor="middle" font-weight="normal" >T</text><text x="435" y="239.8" font-size="11" fill="#1e9fd4" text-anchor="middle" font-weight="normal" >G</text><text x="445" y="239.8" font-size="11" fill="#1e9fd4" text-anchor="middle" font-weight="normal" >C</text><text x="455" y="239.8" font-size="11" fill="#1e9fd4" text-anchor="middle" font-weight="normal" >C</text><text x="465" y="239.8" font-size="11" fill="#1e9fd4" text-anchor="middle" font-weight="normal" >G</text><text x="475" y="239.8" font-size="11" fill="#1e9fd4" text-anchor="middle" font-weight="normal" >C</text><text x="485" y="239.8" font-size="11" fill="#1e9fd4" text-anchor="middle" font-weight="normal" >C</text><text x="495" y="239.8" font-size="11" fill="#1e9fd4" text-anchor="middle" font-weight="normal" >T</text><text x="505" y="239.8" font-size="11" fill="#1e9fd4" text-anchor="middle" font-weight="normal" >G</text><text x="515" y="239.8" font-size="11" fill="#1e9fd4" text-anchor="middle" font-weight="normal" >C</text><text x="525" y="239.8" font-size="11" fill="#1e9fd4" text-anchor="middle" font-weight="normal" >T</text><text x="535" y="239.8" font-size="11" fill="#1e9fd4" text-anchor="middle" font-weight="normal" >G</text><text x="545" y="239.8" font-size="11" fill="#1e9fd4" text-anchor="middle" font-weight="normal" >G</text><text x="555" y="239.8" font-size="11" fill="#1e9fd4" text-anchor="middle" font-weight="normal" >G</text><text x="565" y="239.8" font-size="11" fill="#1e9fd4" text-anchor="middle" font-weight="normal" >C</text><text x="575" y="239.8" font-size="11" fill="#1e9fd4" text-anchor="middle" font-weight="normal" >A</text><text x="585" y="239.8" font-size="11" fill="#1e9fd4" text-anchor="middle" font-weight="normal" >T</text><text x="595" y="239.8" font-size="11" fill="#1e9fd4" text-anchor="middle" font-weight="normal" >C</text><text x="605" y="239.8" font-size="11" fill="#1e9fd4" text-anchor="middle" font-weight="normal" >T</text><text x="615" y="239.8" font-size="11" fill="#1e9fd4" text-anchor="middle" font-weight="normal" >G</text><text x="625" y="239.8" font-size="11" fill="#1e9fd4" text-anchor="middle" font-weight="normal" >C</text><text x="635" y="239.8" font-size="11" fill="#1e9fd4" text-anchor="middle" font-weight="normal" >C</text><text x="645" y="239.8" font-size="11" fill="#1e9fd4" text-anchor="middle" font-weight="normal" >T</text><text x="655" y="239.8" font-size="11" fill="#1e9fd4" text-anchor="middle" font-weight="normal" >C</text><text x="665" y="239.8" font-size="11" fill="#1e9fd4" text-anchor="middle" font-weight="normal" >A</text><text x="675" y="239.8" font-size="11" fill="#1e9fd4" text-anchor="middle" font-weight="normal" >C</text><text x="685" y="239.8" font-size="11" fill="#1e9fd4" text-anchor="middle" font-weight="normal" >C</text><text x="695" y="239.8" font-size="11" fill="#1e9fd4" text-anchor="middle" font-weight="normal" >T</text><text x="705" y="239.8" font-size="11" fill="#1e9fd4" text-anchor="middle" font-weight="normal" >C</text><text x="715" y="239.8" font-size="11" fill="#1e9fd4" text-anchor="middle" font-weight="normal" >C</text><text x="725" y="239.8" font-size="11" fill="#1e9fd4" text-anchor="middle" font-weight="normal" >A</text><text x="735" y="239.8" font-size="11" fill="#1e9fd4" text-anchor="middle" font-weight="normal" >C</text><text x="745" y="239.8" font-size="11" fill="#1e9fd4" text-anchor="middle" font-weight="normal" >C</text><text x="755" y="239.8" font-size="11" fill="#1e9fd4" text-anchor="middle" font-weight="normal" >G</text><text x="765" y="239.8" font-size="11" fill="#1e9fd4" text-anchor="middle" font-weight="normal" >T</text><text x="775" y="239.8" font-size="11" fill="#1e9fd4" text-anchor="middle" font-weight="normal" >G</text><text x="785" y="239.8" font-size="11" fill="#1e9fd4" text-anchor="middle" font-weight="normal" >C</text><text x="795" y="239.8" font-size="11" fill="#1e9fd4" text-anchor="middle" font-weight="normal" >A</text><text x="805" y="239.8" font-size="11" fill="#1e9fd4" text-anchor="middle" font-weight="normal" >G</text><text x="815" y="239.8" font-size="11" fill="#1e9fd4" text-anchor="middle" font-weight="normal" >C</text><text x="825" y="239.8" font-size="11" fill="#a6d6ec" text-anchor="middle" font-weight="normal" >T</text><text x="835" y="239.8" font-size="11" fill="#a6d6ec" text-anchor="middle" font-weight="normal" >C</text><text x="845" y="239.8" font-size="11" fill="#a6d6ec" text-anchor="middle" font-weight="normal" >A</text><text x="855" y="239.8" font-size="11" fill="#a6d6ec" text-anchor="middle" font-weight="normal" >T</text><text x="865" y="239.8" font-size="11" fill="#a6d6ec" text-anchor="middle" font-weight="normal" >C</text><text x="875" y="239.8" font-size="11" fill="#a6d6ec" text-anchor="middle" font-weight="normal" >A</text><text x="885" y="239.8" font-size="11" fill="#a6d6ec" text-anchor="middle" font-weight="normal" >C</text><text x="895" y="239.8" font-size="11" fill="#a6d6ec" text-anchor="middle" font-weight="normal" >G</text><text x="905" y="239.8" font-size="11" fill="#a6d6ec" text-anchor="middle" font-weight="normal" >C</text><text x="915" y="239.8" font-size="11" fill="#a6d6ec" text-anchor="middle" font-weight="normal" >A</text><text x="925" y="239.8" font-size="11" fill="#a6d6ec" text-anchor="middle" font-weight="normal" >G</text><text x="935" y="239.8" font-size="11" fill="#a6d6ec" text-anchor="middle" font-weight="normal" >C</text><text x="945" y="239.8" font-size="11" fill="#a6d6ec" text-anchor="middle" font-weight="normal" >T</text><text x="955" y="239.8" font-size="11" fill="#a6d6ec" text-anchor="middle" font-weight="normal" >C</text><text x="965" y="239.8" font-size="11" fill="#a6d6ec" text-anchor="middle" font-weight="normal" >T</text><text x="975" y="239.8" font-size="11" fill="#a6d6ec" text-anchor="middle" font-weight="normal" >G</text><text x="1065" y="239.8" font-size="11" fill="#a8a8ec" text-anchor="middle" font-weight="normal" >G</text><text x="1075" y="239.8" font-size="11" fill="#a8a8ec" text-anchor="middle" font-weight="normal" >C</text><text x="1085" y="239.8" font-size="11" fill="#a8a8ec" text-anchor="middle" font-weight="normal" >T</text><text x="1095" y="239.8" font-size="11" fill="#a8a8ec" text-anchor="middle" font-weight="normal" >G</text><text x="1105" y="239.8" font-size="11" fill="#a8a8ec" text-anchor="middle" font-weight="normal" >C</text><text x="1115" y="239.8" font-size="11" fill="#a8a8ec" text-anchor="middle" font-weight="normal" >C</text><text x="1125" y="239.8" font-size="11" fill="#a8a8ec" text-anchor="middle" font-weight="normal" >T</text><text x="1135" y="239.8" font-size="11" fill="#a8a8ec" text-anchor="middle" font-weight="normal" >C</text><text x="1145" y="239.8" font-size="11" fill="#a8a8ec" text-anchor="middle" font-weight="normal" >C</text><text x="1155" y="239.8" font-size="11" fill="#a8a8ec" text-anchor="middle" font-weight="normal" >T</text><text x="1165" y="239.8" font-size="11" fill="#a8a8ec" text-anchor="middle" font-weight="normal" >G</text><text x="1175" y="239.8" font-size="11" fill="#a8a8ec" text-anchor="middle" font-weight="normal" >G</text><text x="1185" y="239.8" font-size="11" fill="#a8a8ec" text-anchor="middle" font-weight="normal" >A</text><text x="1195" y="239.8" font-size="11" fill="#a8a8ec" text-anchor="middle" font-weight="normal" >C</text><text x="1205" y="239.8" font-size="11" fill="#a8a8ec" text-anchor="middle" font-weight="normal" >T</text><text x="1215" y="239.8" font-size="11" fill="#a8a8ec" text-anchor="middle" font-weight="normal" >A</text><text x="1225" y="239.8" font-size="11" fill="#a8a8ec" text-anchor="middle" font-weight="normal" >K</text><text x="1235" y="239.8" font-size="11" fill="#a8a8ec" text-anchor="middle" font-weight="normal" >G</text><text x="1245" y="239.8" font-size="11" fill="#a8a8ec" text-anchor="middle" font-weight="normal" >T</text><text x="1255" y="239.8" font-size="11" fill="#1a1a1a" text-anchor="middle" font-weight="normal" >M</text><text x="1265" y="239.8" font-size="11" fill="#1c12c8" text-anchor="middle" font-weight="normal" >C</text><text x="1275" y="239.8" font-size="11" fill="#1c12c8" text-anchor="middle" font-weight="normal" >G</text><text x="1285" y="239.8" font-size="11" fill="#1c12c8" text-anchor="middle" font-weight="normal" >G</text><text x="1295" y="239.8" font-size="11" fill="#1c12c8" text-anchor="middle" font-weight="normal" >C</text><rect x="500" y="241.4" width="9" height="13" fill="#f6d2d2" /><rect x="610" y="241.4" width="9" height="13" fill="#f6d2d2" /><rect x="1250" y="241.4" width="9" height="13" fill="#dcdcdc" /><text x="145" y="252.4" font-size="11" fill="#1e9fd4" text-anchor="middle" font-weight="normal" >G</text><text x="155" y="252.4" font-size="11" fill="#1e9fd4" text-anchor="middle" font-weight="normal" >A</text><text x="165" y="252.4" font-size="11" fill="#1e9fd4" text-anchor="middle" font-weight="normal" >T</text><text x="175" y="252.4" font-size="11" fill="#1e9fd4" text-anchor="middle" font-weight="normal" >G</text><text x="185" y="252.4" font-size="11" fill="#1e9fd4" text-anchor="middle" font-weight="normal" >G</text><text x="195" y="252.4" font-size="11" fill="#1e9fd4" text-anchor="middle" font-weight="normal" >C</text><text x="205" y="252.4" font-size="11" fill="#1e9fd4" text-anchor="middle" font-weight="normal" >C</text><text x="215" y="252.4" font-size="11" fill="#1e9fd4" text-anchor="middle" font-weight="normal" >A</text><text x="225" y="252.4" font-size="11" fill="#1e9fd4" text-anchor="middle" font-weight="normal" >G</text><text x="235" y="252.4" font-size="11" fill="#1e9fd4" text-anchor="middle" font-weight="normal" >C</text><text x="245" y="252.4" font-size="11" fill="#1e9fd4" text-anchor="middle" font-weight="normal" >G</text><text x="255" y="252.4" font-size="11" fill="#1e9fd4" text-anchor="middle" font-weight="normal" >T</text><text x="265" y="252.4" font-size="11" fill="#1e9fd4" text-anchor="middle" font-weight="normal" >G</text><text x="275" y="252.4" font-size="11" fill="#1e9fd4" text-anchor="middle" font-weight="normal" >G</text><text x="285" y="252.4" font-size="11" fill="#1e9fd4" text-anchor="middle" font-weight="normal" >A</text><text x="295" y="252.4" font-size="11" fill="#1e9fd4" text-anchor="middle" font-weight="normal" >C</text><text x="305" y="252.4" font-size="11" fill="#1e9fd4" text-anchor="middle" font-weight="normal" >A</text><text x="315" y="252.4" font-size="11" fill="#1e9fd4" text-anchor="middle" font-weight="normal" >A</text><text x="325" y="252.4" font-size="11" fill="#1e9fd4" text-anchor="middle" font-weight="normal" >C</text><text x="335" y="252.4" font-size="11" fill="#1e9fd4" text-anchor="middle" font-weight="normal" >C</text><text x="345" y="252.4" font-size="11" fill="#1e9fd4" text-anchor="middle" font-weight="normal" >C</text><text x="355" y="252.4" font-size="11" fill="#1e9fd4" text-anchor="middle" font-weight="normal" >C</text><text x="365" y="252.4" font-size="11" fill="#1e9fd4" text-anchor="middle" font-weight="normal" >C</text><text x="375" y="252.4" font-size="11" fill="#1e9fd4" text-anchor="middle" font-weight="normal" >A</text><text x="385" y="252.4" font-size="11" fill="#1e9fd4" text-anchor="middle" font-weight="normal" >C</text><text x="395" y="252.4" font-size="11" fill="#1e9fd4" text-anchor="middle" font-weight="normal" >G</text><text x="405" y="252.4" font-size="11" fill="#1e9fd4" text-anchor="middle" font-weight="normal" >T</text><text x="415" y="252.4" font-size="11" fill="#1e9fd4" text-anchor="middle" font-weight="normal" >G</text><text x="425" y="252.4" font-size="11" fill="#1e9fd4" text-anchor="middle" font-weight="normal" >T</text><text x="435" y="252.4" font-size="11" fill="#1e9fd4" text-anchor="middle" font-weight="normal" >G</text><text x="445" y="252.4" font-size="11" fill="#1e9fd4" text-anchor="middle" font-weight="normal" >C</text><text x="455" y="252.4" font-size="11" fill="#1e9fd4" text-anchor="middle" font-weight="normal" >C</text><text x="465" y="252.4" font-size="11" fill="#1e9fd4" text-anchor="middle" font-weight="normal" >G</text><text x="475" y="252.4" font-size="11" fill="#1e9fd4" text-anchor="middle" font-weight="normal" >C</text><text x="485" y="252.4" font-size="11" fill="#1e9fd4" text-anchor="middle" font-weight="normal" >C</text><text x="495" y="252.4" font-size="11" fill="#1e9fd4" text-anchor="middle" font-weight="normal" >T</text><text x="505" y="252.4" font-size="11" fill="#1a1a1a" text-anchor="middle" font-weight="normal" >A</text><text x="515" y="252.4" font-size="11" fill="#1e9fd4" text-anchor="middle" font-weight="normal" >C</text><text x="525" y="252.4" font-size="11" fill="#1e9fd4" text-anchor="middle" font-weight="normal" >T</text><text x="535" y="252.4" font-size="11" fill="#1e9fd4" text-anchor="middle" font-weight="normal" >G</text><text x="545" y="252.4" font-size="11" fill="#1e9fd4" text-anchor="middle" font-weight="normal" >G</text><text x="555" y="252.4" font-size="11" fill="#1e9fd4" text-anchor="middle" font-weight="normal" >G</text><text x="565" y="252.4" font-size="11" fill="#1e9fd4" text-anchor="middle" font-weight="normal" >C</text><text x="575" y="252.4" font-size="11" fill="#1e9fd4" text-anchor="middle" font-weight="normal" >A</text><text x="585" y="252.4" font-size="11" fill="#1e9fd4" text-anchor="middle" font-weight="normal" >T</text><text x="595" y="252.4" font-size="11" fill="#1e9fd4" text-anchor="middle" font-weight="normal" >C</text><text x="605" y="252.4" font-size="11" fill="#1e9fd4" text-anchor="middle" font-weight="normal" >T</text><text x="615" y="252.4" font-size="11" fill="#1a1a1a" text-anchor="middle" font-weight="normal" >A</text><text x="625" y="252.4" font-size="11" fill="#1e9fd4" text-anchor="middle" font-weight="normal" >C</text><text x="635" y="252.4" font-size="11" fill="#1e9fd4" text-anchor="middle" font-weight="normal" >C</text><text x="645" y="252.4" font-size="11" fill="#1e9fd4" text-anchor="middle" font-weight="normal" >T</text><text x="655" y="252.4" font-size="11" fill="#1e9fd4" text-anchor="middle" font-weight="normal" >C</text><text x="665" y="252.4" font-size="11" fill="#1e9fd4" text-anchor="middle" font-weight="normal" >A</text><text x="675" y="252.4" font-size="11" fill="#1e9fd4" text-anchor="middle" font-weight="normal" >C</text><text x="685" y="252.4" font-size="11" fill="#1e9fd4" text-anchor="middle" font-weight="normal" >C</text><text x="695" y="252.4" font-size="11" fill="#1e9fd4" text-anchor="middle" font-weight="normal" >T</text><text x="705" y="252.4" font-size="11" fill="#1e9fd4" text-anchor="middle" font-weight="normal" >C</text><text x="715" y="252.4" font-size="11" fill="#1e9fd4" text-anchor="middle" font-weight="normal" >C</text><text x="725" y="252.4" font-size="11" fill="#1e9fd4" text-anchor="middle" font-weight="normal" >A</text><text x="735" y="252.4" font-size="11" fill="#1e9fd4" text-anchor="middle" font-weight="normal" >C</text><text x="745" y="252.4" font-size="11" fill="#1e9fd4" text-anchor="middle" font-weight="normal" >C</text><text x="755" y="252.4" font-size="11" fill="#1e9fd4" text-anchor="middle" font-weight="normal" >G</text><text x="765" y="252.4" font-size="11" fill="#1e9fd4" text-anchor="middle" font-weight="normal" >T</text><text x="775" y="252.4" font-size="11" fill="#1e9fd4" text-anchor="middle" font-weight="normal" >G</text><text x="785" y="252.4" font-size="11" fill="#1e9fd4" text-anchor="middle" font-weight="normal" >C</text><text x="795" y="252.4" font-size="11" fill="#1e9fd4" text-anchor="middle" font-weight="normal" >A</text><text x="805" y="252.4" font-size="11" fill="#1e9fd4" text-anchor="middle" font-weight="normal" >G</text><text x="815" y="252.4" font-size="11" fill="#1e9fd4" text-anchor="middle" font-weight="normal" >C</text><text x="825" y="252.4" font-size="11" fill="#a6d6ec" text-anchor="middle" font-weight="normal" >T</text><text x="835" y="252.4" font-size="11" fill="#a6d6ec" text-anchor="middle" font-weight="normal" >C</text><text x="845" y="252.4" font-size="11" fill="#a6d6ec" text-anchor="middle" font-weight="normal" >A</text><text x="855" y="252.4" font-size="11" fill="#a6d6ec" text-anchor="middle" font-weight="normal" >T</text><text x="865" y="252.4" font-size="11" fill="#a6d6ec" text-anchor="middle" font-weight="normal" >C</text><text x="875" y="252.4" font-size="11" fill="#a6d6ec" text-anchor="middle" font-weight="normal" >A</text><text x="885" y="252.4" font-size="11" fill="#a6d6ec" text-anchor="middle" font-weight="normal" >C</text><text x="895" y="252.4" font-size="11" fill="#a6d6ec" text-anchor="middle" font-weight="normal" >G</text><text x="905" y="252.4" font-size="11" fill="#a6d6ec" text-anchor="middle" font-weight="normal" >C</text><text x="915" y="252.4" font-size="11" fill="#a6d6ec" text-anchor="middle" font-weight="normal" >A</text><text x="925" y="252.4" font-size="11" fill="#a6d6ec" text-anchor="middle" font-weight="normal" >G</text><text x="935" y="252.4" font-size="11" fill="#a6d6ec" text-anchor="middle" font-weight="normal" >C</text><text x="945" y="252.4" font-size="11" fill="#a6d6ec" text-anchor="middle" font-weight="normal" >T</text><text x="955" y="252.4" font-size="11" fill="#a6d6ec" text-anchor="middle" font-weight="normal" >C</text><text x="965" y="252.4" font-size="11" fill="#a6d6ec" text-anchor="middle" font-weight="normal" >A</text><text x="975" y="252.4" font-size="11" fill="#a6d6ec" text-anchor="middle" font-weight="normal" >T</text><text x="985" y="252.4" font-size="11" fill="#a6d6ec" text-anchor="middle" font-weight="normal" >G</text><text x="1065" y="252.4" font-size="11" fill="#a8a8ec" text-anchor="middle" font-weight="normal" >G</text><text x="1075" y="252.4" font-size="11" fill="#a8a8ec" text-anchor="middle" font-weight="normal" >C</text><text x="1085" y="252.4" font-size="11" fill="#a8a8ec" text-anchor="middle" font-weight="normal" >T</text><text x="1095" y="252.4" font-size="11" fill="#a8a8ec" text-anchor="middle" font-weight="normal" >G</text><text x="1105" y="252.4" font-size="11" fill="#a8a8ec" text-anchor="middle" font-weight="normal" >C</text><text x="1115" y="252.4" font-size="11" fill="#a8a8ec" text-anchor="middle" font-weight="normal" >C</text><text x="1125" y="252.4" font-size="11" fill="#a8a8ec" text-anchor="middle" font-weight="normal" >T</text><text x="1135" y="252.4" font-size="11" fill="#a8a8ec" text-anchor="middle" font-weight="normal" >C</text><text x="1145" y="252.4" font-size="11" fill="#a8a8ec" text-anchor="middle" font-weight="normal" >C</text><text x="1155" y="252.4" font-size="11" fill="#a8a8ec" text-anchor="middle" font-weight="normal" >T</text><text x="1165" y="252.4" font-size="11" fill="#a8a8ec" text-anchor="middle" font-weight="normal" >G</text><text x="1175" y="252.4" font-size="11" fill="#a8a8ec" text-anchor="middle" font-weight="normal" >G</text><text x="1185" y="252.4" font-size="11" fill="#a8a8ec" text-anchor="middle" font-weight="normal" >A</text><text x="1195" y="252.4" font-size="11" fill="#a8a8ec" text-anchor="middle" font-weight="normal" >C</text><text x="1205" y="252.4" font-size="11" fill="#a8a8ec" text-anchor="middle" font-weight="normal" >W</text><text x="1215" y="252.4" font-size="11" fill="#a8a8ec" text-anchor="middle" font-weight="normal" >A</text><text x="1225" y="252.4" font-size="11" fill="#a8a8ec" text-anchor="middle" font-weight="normal" >T</text><text x="1235" y="252.4" font-size="11" fill="#a8a8ec" text-anchor="middle" font-weight="normal" >G</text><text x="1245" y="252.4" font-size="11" fill="#a8a8ec" text-anchor="middle" font-weight="normal" >T</text><text x="1255" y="252.4" font-size="11" fill="#1a1a1a" text-anchor="middle" font-weight="normal" >M</text><text x="1265" y="252.4" font-size="11" fill="#1c12c8" text-anchor="middle" font-weight="normal" >C</text><text x="1275" y="252.4" font-size="11" fill="#1c12c8" text-anchor="middle" font-weight="normal" >G</text><text x="1285" y="252.4" font-size="11" fill="#1c12c8" text-anchor="middle" font-weight="normal" >G</text><text x="1295" y="252.4" font-size="11" fill="#1c12c8" text-anchor="middle" font-weight="normal" >C</text></g><g clip-path="url(#trk)"><rect x="799.5" y="296.5" width="9" height="14" fill="#f0c4c4" /><text x="804.0" y="307.5" font-size="10" fill="#101010" text-anchor="middle" font-weight="normal" >G</text><rect x="799.5" y="312.3" width="9" height="14" fill="#cd5c5c" /><text x="804.0" y="323.3" font-size="10" fill="#101010" text-anchor="middle" font-weight="normal" >A</text><rect x="880" y="296.5" width="8.5" height="14" fill="#f0c4c4" /><text x="884.25" y="307.5" font-size="10" fill="#101010" text-anchor="middle" font-weight="normal" >C</text><rect x="880" y="312.3" width="8.5" height="14" fill="#cd5c5c" /><text x="884.25" y="323.3" font-size="10" fill="#101010" text-anchor="middle" font-weight="normal" >T</text><rect x="389.5" y="361.3" width="9" height="14" fill="#cd5c5c" /><text x="394.0" y="372.3" font-size="10" fill="#101010" text-anchor="middle" font-weight="normal" >A</text><rect x="389.5" y="377.5" width="9" height="14" fill="#cd5c5c" /><text x="394.0" y="388.5" font-size="10" fill="#101010" text-anchor="middle" font-weight="normal" >C</text><rect x="799.5" y="377.5" width="9" height="14" fill="#cd5c5c" /><text x="804.0" y="388.5" font-size="10" fill="#101010" text-anchor="middle" font-weight="normal" >A</text><rect x="1290" y="377.5" width="9" height="14" fill="#cd5c5c" /><text x="1294.5" y="388.5" font-size="10" fill="#101010" text-anchor="middle" font-weight="normal" >A</text><rect x="190" y="449.0" width="9" height="7.5" fill="#cd5c5c" /><rect x="190" y="449.0" width="9" height="7.5" fill="none" stroke="#000" stroke-opacity="0.08" stroke-width="0.6"/><text x="191.5" y="455.2" font-size="6" fill="#101010" text-anchor="start" font-weight="bold" >T</text><rect x="190" y="441.1" width="9" height="7.5" fill="#f0c4c4" /><rect x="190" y="441.1" width="9" height="7.5" fill="none" stroke="#000" stroke-opacity="0.08" stroke-width="0.6"/><text x="191.5" y="447.3" font-size="6" fill="#101010" text-anchor="start" font-weight="bold" >C</text><rect x="220" y="449.0" width="9" height="7.5" fill="#cd5c5c" /><rect x="220" y="449.0" width="9" height="7.5" fill="none" stroke="#000" stroke-opacity="0.08" stroke-width="0.6"/><text x="221.5" y="455.2" font-size="6" fill="#101010" text-anchor="start" font-weight="bold" >T</text><rect x="220" y="441.1" width="9" height="7.5" fill="#f0c4c4" /><rect x="220" y="441.1" width="9" height="7.5" fill="none" stroke="#000" stroke-opacity="0.08" stroke-width="0.6"/><text x="221.5" y="447.3" font-size="6" fill="#101010" text-anchor="start" font-weight="bold" >G</text><rect x="220" y="433.2" width="9" height="7.5" fill="#cd5c5c" /><rect x="220" y="433.2" width="9" height="7.5" fill="none" stroke="#000" stroke-opacity="0.08" stroke-width="0.6"/><text x="221.5" y="439.4" font-size="6" fill="#101010" text-anchor="start" font-weight="bold" >T</text><rect x="220" y="425.3" width="9" height="7.5" fill="#f0c4c4" /><rect x="220" y="425.3" width="9" height="7.5" fill="none" stroke="#000" stroke-opacity="0.08" stroke-width="0.6"/><text x="221.5" y="431.5" font-size="6" fill="#101010" text-anchor="start" font-weight="bold" >G</text><rect x="230" y="449.0" width="9" height="7.5" fill="#cd5c5c" /><rect x="230" y="449.0" width="9" height="7.5" fill="none" stroke="#000" stroke-opacity="0.08" stroke-width="0.6"/><text x="231.5" y="455.2" font-size="6" fill="#101010" text-anchor="start" font-weight="bold" >T</text><rect x="230" y="441.1" width="9" height="7.5" fill="#f0c4c4" /><rect x="230" y="441.1" width="9" height="7.5" fill="none" stroke="#000" stroke-opacity="0.08" stroke-width="0.6"/><text x="231.5" y="447.3" font-size="6" fill="#101010" text-anchor="start" font-weight="bold" >C</text><rect x="240" y="449.0" width="9" height="7.5" fill="#cd5c5c" /><rect x="240" y="449.0" width="9" height="7.5" fill="none" stroke="#000" stroke-opacity="0.08" stroke-width="0.6"/><text x="241.5" y="455.2" font-size="6" fill="#101010" text-anchor="start" font-weight="bold" >T</text><rect x="240" y="441.1" width="9" height="7.5" fill="#cd5c5c" /><rect x="240" y="441.1" width="9" height="7.5" fill="none" stroke="#000" stroke-opacity="0.08" stroke-width="0.6"/><text x="241.5" y="447.3" font-size="6" fill="#101010" text-anchor="start" font-weight="bold" >C</text><rect x="240" y="433.2" width="9" height="7.5" fill="#cd5c5c" /><rect x="240" y="433.2" width="9" height="7.5" fill="none" stroke="#000" stroke-opacity="0.08" stroke-width="0.6"/><text x="241.5" y="439.4" font-size="6" fill="#101010" text-anchor="start" font-weight="bold" >A</text><rect x="240" y="425.3" width="9" height="7.5" fill="#f0c4c4" /><rect x="240" y="425.3" width="9" height="7.5" fill="none" stroke="#000" stroke-opacity="0.08" stroke-width="0.6"/><text x="241.5" y="431.5" font-size="6" fill="#101010" text-anchor="start" font-weight="bold" >G</text><rect x="240" y="417.4" width="9" height="7.5" fill="#f0c4c4" /><rect x="240" y="417.4" width="9" height="7.5" fill="none" stroke="#000" stroke-opacity="0.08" stroke-width="0.6"/><text x="241.5" y="423.59999999999997" font-size="6" fill="#101010" text-anchor="start" font-weight="bold" >G</text><rect x="240" y="409.5" width="9" height="7.5" fill="#f0c4c4" /><rect x="240" y="409.5" width="9" height="7.5" fill="none" stroke="#000" stroke-opacity="0.08" stroke-width="0.6"/><text x="241.5" y="415.7" font-size="6" fill="#101010" text-anchor="start" font-weight="bold" >G</text><rect x="290" y="433.2" width="9" height="7.5" fill="#cd5c5c" /><rect x="290" y="433.2" width="9" height="7.5" fill="none" stroke="#000" stroke-opacity="0.08" stroke-width="0.6"/><text x="291.5" y="439.4" font-size="6" fill="#101010" text-anchor="start" font-weight="bold" >T</text><rect x="290" y="425.3" width="9" height="7.5" fill="#f0c4c4" /><rect x="290" y="425.3" width="9" height="7.5" fill="none" stroke="#000" stroke-opacity="0.08" stroke-width="0.6"/><text x="291.5" y="431.5" font-size="6" fill="#101010" text-anchor="start" font-weight="bold" >C</text><rect x="300" y="449.0" width="9" height="7.5" fill="#cd5c5c" /><rect x="300" y="449.0" width="9" height="7.5" fill="none" stroke="#000" stroke-opacity="0.08" stroke-width="0.6"/><text x="301.5" y="455.2" font-size="6" fill="#101010" text-anchor="start" font-weight="bold" >G</text><rect x="300" y="441.1" width="9" height="7.5" fill="#f0c4c4" /><rect x="300" y="441.1" width="9" height="7.5" fill="none" stroke="#000" stroke-opacity="0.08" stroke-width="0.6"/><text x="301.5" y="447.3" font-size="6" fill="#101010" text-anchor="start" font-weight="bold" >A</text><rect x="370" y="449.0" width="9" height="7.5" fill="#cd5c5c" /><rect x="370" y="449.0" width="9" height="7.5" fill="none" stroke="#000" stroke-opacity="0.08" stroke-width="0.6"/><text x="371.5" y="455.2" font-size="6" fill="#101010" text-anchor="start" font-weight="bold" >G</text><rect x="370" y="441.1" width="9" height="7.5" fill="#f0c4c4" /><rect x="370" y="441.1" width="9" height="7.5" fill="none" stroke="#000" stroke-opacity="0.08" stroke-width="0.6"/><text x="371.5" y="447.3" font-size="6" fill="#101010" text-anchor="start" font-weight="bold" >A</text><rect x="460" y="449.0" width="9" height="7.5" fill="#cd5c5c" /><rect x="460" y="449.0" width="9" height="7.5" fill="none" stroke="#000" stroke-opacity="0.08" stroke-width="0.6"/><text x="461.5" y="455.2" font-size="6" fill="#101010" text-anchor="start" font-weight="bold" >A</text><rect x="460" y="441.1" width="9" height="7.5" fill="#f0c4c4" /><rect x="460" y="441.1" width="9" height="7.5" fill="none" stroke="#000" stroke-opacity="0.08" stroke-width="0.6"/><text x="461.5" y="447.3" font-size="6" fill="#101010" text-anchor="start" font-weight="bold" >G</text><rect x="480" y="449.0" width="9" height="7.5" fill="#cd5c5c" /><rect x="480" y="449.0" width="9" height="7.5" fill="none" stroke="#000" stroke-opacity="0.08" stroke-width="0.6"/><text x="481.5" y="455.2" font-size="6" fill="#101010" text-anchor="start" font-weight="bold" >T</text><rect x="480" y="441.1" width="9" height="7.5" fill="#f0c4c4" /><rect x="480" y="441.1" width="9" height="7.5" fill="none" stroke="#000" stroke-opacity="0.08" stroke-width="0.6"/><text x="481.5" y="447.3" font-size="6" fill="#101010" text-anchor="start" font-weight="bold" >C</text><rect x="530" y="449.0" width="9" height="7.5" fill="#cd5c5c" /><rect x="530" y="449.0" width="9" height="7.5" fill="none" stroke="#000" stroke-opacity="0.08" stroke-width="0.6"/><text x="531.5" y="455.2" font-size="6" fill="#101010" text-anchor="start" font-weight="bold" >T</text><rect x="530" y="441.1" width="9" height="7.5" fill="#f0c4c4" /><rect x="530" y="441.1" width="9" height="7.5" fill="none" stroke="#000" stroke-opacity="0.08" stroke-width="0.6"/><text x="531.5" y="447.3" font-size="6" fill="#101010" text-anchor="start" font-weight="bold" >G</text><rect x="540" y="449.0" width="9" height="7.5" fill="#cd5c5c" /><rect x="540" y="449.0" width="9" height="7.5" fill="none" stroke="#000" stroke-opacity="0.08" stroke-width="0.6"/><text x="541.5" y="455.2" font-size="6" fill="#101010" text-anchor="start" font-weight="bold" >T</text><rect x="540" y="441.1" width="9" height="7.5" fill="#f0c4c4" /><rect x="540" y="441.1" width="9" height="7.5" fill="none" stroke="#000" stroke-opacity="0.08" stroke-width="0.6"/><text x="541.5" y="447.3" font-size="6" fill="#101010" text-anchor="start" font-weight="bold" >G</text><rect x="550" y="449.0" width="9" height="7.5" fill="#cd5c5c" /><rect x="550" y="449.0" width="9" height="7.5" fill="none" stroke="#000" stroke-opacity="0.08" stroke-width="0.6"/><text x="551.5" y="455.2" font-size="6" fill="#101010" text-anchor="start" font-weight="bold" >T</text><rect x="550" y="441.1" width="9" height="7.5" fill="#f0c4c4" /><rect x="550" y="441.1" width="9" height="7.5" fill="none" stroke="#000" stroke-opacity="0.08" stroke-width="0.6"/><text x="551.5" y="447.3" font-size="6" fill="#101010" text-anchor="start" font-weight="bold" >G</text><rect x="590" y="449.0" width="9" height="7.5" fill="#cd5c5c" /><rect x="590" y="449.0" width="9" height="7.5" fill="none" stroke="#000" stroke-opacity="0.08" stroke-width="0.6"/><text x="591.5" y="455.2" font-size="6" fill="#101010" text-anchor="start" font-weight="bold" >T</text><rect x="590" y="441.1" width="9" height="7.5" fill="#f0c4c4" /><rect x="590" y="441.1" width="9" height="7.5" fill="none" stroke="#000" stroke-opacity="0.08" stroke-width="0.6"/><text x="591.5" y="447.3" font-size="6" fill="#101010" text-anchor="start" font-weight="bold" >C</text><rect x="680" y="449.0" width="9" height="7.5" fill="#cd5c5c" /><rect x="680" y="449.0" width="9" height="7.5" fill="none" stroke="#000" stroke-opacity="0.08" stroke-width="0.6"/><text x="681.5" y="455.2" font-size="6" fill="#101010" text-anchor="start" font-weight="bold" >T</text><rect x="680" y="441.1" width="9" height="7.5" fill="#f0c4c4" /><rect x="680" y="441.1" width="9" height="7.5" fill="none" stroke="#000" stroke-opacity="0.08" stroke-width="0.6"/><text x="681.5" y="447.3" font-size="6" fill="#101010" text-anchor="start" font-weight="bold" >C</text><rect x="740" y="449.0" width="9" height="7.5" fill="#cd5c5c" /><rect x="740" y="449.0" width="9" height="7.5" fill="none" stroke="#000" stroke-opacity="0.08" stroke-width="0.6"/><text x="741.5" y="455.2" font-size="6" fill="#101010" text-anchor="start" font-weight="bold" >T</text><rect x="740" y="441.1" width="9" height="7.5" fill="#f0c4c4" /><rect x="740" y="441.1" width="9" height="7.5" fill="none" stroke="#000" stroke-opacity="0.08" stroke-width="0.6"/><text x="741.5" y="447.3" font-size="6" fill="#101010" text-anchor="start" font-weight="bold" >C</text><rect x="800" y="449.0" width="9" height="7.5" fill="#cd5c5c" /><rect x="800" y="449.0" width="9" height="7.5" fill="none" stroke="#000" stroke-opacity="0.08" stroke-width="0.6"/><text x="801.5" y="455.2" font-size="6" fill="#101010" text-anchor="start" font-weight="bold" >A</text><rect x="800" y="441.1" width="9" height="7.5" fill="#f0c4c4" /><rect x="800" y="441.1" width="9" height="7.5" fill="none" stroke="#000" stroke-opacity="0.08" stroke-width="0.6"/><text x="801.5" y="447.3" font-size="6" fill="#101010" text-anchor="start" font-weight="bold" >G</text><rect x="880" y="449.0" width="9" height="7.5" fill="#cd5c5c" /><rect x="880" y="449.0" width="9" height="7.5" fill="none" stroke="#000" stroke-opacity="0.08" stroke-width="0.6"/><text x="881.5" y="455.2" font-size="6" fill="#101010" text-anchor="start" font-weight="bold" >T</text><rect x="880" y="441.1" width="9" height="7.5" fill="#f0c4c4" /><rect x="880" y="441.1" width="9" height="7.5" fill="none" stroke="#000" stroke-opacity="0.08" stroke-width="0.6"/><text x="881.5" y="447.3" font-size="6" fill="#101010" text-anchor="start" font-weight="bold" >C</text><rect x="1080" y="449.0" width="9" height="7.5" fill="#cd5c5c" /><rect x="1080" y="449.0" width="9" height="7.5" fill="none" stroke="#000" stroke-opacity="0.08" stroke-width="0.6"/><text x="1081.5" y="455.2" font-size="6" fill="#101010" text-anchor="start" font-weight="bold" >A</text><rect x="1080" y="441.1" width="9" height="7.5" fill="#f0c4c4" /><rect x="1080" y="441.1" width="9" height="7.5" fill="none" stroke="#000" stroke-opacity="0.08" stroke-width="0.6"/><text x="1081.5" y="447.3" font-size="6" fill="#101010" text-anchor="start" font-weight="bold" >T</text><rect x="1120" y="449.0" width="9" height="7.5" fill="#cd5c5c" /><rect x="1120" y="449.0" width="9" height="7.5" fill="none" stroke="#000" stroke-opacity="0.08" stroke-width="0.6"/><text x="1121.5" y="455.2" font-size="6" fill="#101010" text-anchor="start" font-weight="bold" >A</text><rect x="1120" y="441.1" width="9" height="7.5" fill="#f0c4c4" /><rect x="1120" y="441.1" width="9" height="7.5" fill="none" stroke="#000" stroke-opacity="0.08" stroke-width="0.6"/><text x="1121.5" y="447.3" font-size="6" fill="#101010" text-anchor="start" font-weight="bold" >T</text><rect x="1280" y="449.0" width="9" height="7.5" fill="#cd5c5c" /><rect x="1280" y="449.0" width="9" height="7.5" fill="none" stroke="#000" stroke-opacity="0.08" stroke-width="0.6"/><text x="1281.5" y="455.2" font-size="6" fill="#101010" text-anchor="start" font-weight="bold" >A</text><rect x="1280" y="441.1" width="9" height="7.5" fill="#f0c4c4" /><rect x="1280" y="441.1" width="9" height="7.5" fill="none" stroke="#000" stroke-opacity="0.08" stroke-width="0.6"/><text x="1281.5" y="447.3" font-size="6" fill="#101010" text-anchor="start" font-weight="bold" >G</text><rect x="269.5" y="449" width="28.5" height="7.5" fill="#cd5c5c" /><rect x="269.5" y="441.1" width="28.5" height="7.5" fill="#f0c4c4" /><text x="271" y="455.2" font-size="6" fill="#101010" text-anchor="start" font-weight="bold" >T</text><text x="271" y="447.3" font-size="6" fill="#101010" text-anchor="start" font-weight="bold" >G</text><text x="281" y="455.2" font-size="6" fill="#101010" text-anchor="start" font-weight="bold" >..</text><text x="281" y="447.3" font-size="6" fill="#101010" text-anchor="start" font-weight="bold" >A</text><text x="291" y="455.2" font-size="6" fill="#101010" text-anchor="start" font-weight="bold" >G</text><text x="291" y="447.3" font-size="6" fill="#101010" text-anchor="start" font-weight="bold" >C</text><rect x="158.3" y="439.4" width="1.4" height="7.600000000000023" fill="#f0d8d8" /><rect x="158.3" y="447.0" width="1.4" height="8.0" fill="#c87878" /><path d="M155.8 438.4 L162.2 438.4 L159 442.4 Z" fill="#f2c6c6"/><path d="M155.8 446.0 L162.2 446.0 L159 450.0 Z" fill="#bc5454"/><rect x="198.3" y="424.4" width="1.4" height="7.600000000000023" fill="#f0d8d8" /><rect x="198.3" y="432.0" width="1.4" height="8.0" fill="#c87878" /><path d="M195.8 423.4 L202.2 423.4 L199 427.4 Z" fill="#f2c6c6"/><path d="M195.8 431.0 L202.2 431.0 L199 435.0 Z" fill="#bc5454"/><rect x="228.3" y="409.4" width="1.4" height="7.600000000000023" fill="#f0d8d8" /><rect x="228.3" y="417.0" width="1.4" height="8.0" fill="#c87878" /><path d="M225.8 408.4 L232.2 408.4 L229 412.4 Z" fill="#f2c6c6"/><path d="M225.8 416.0 L232.2 416.0 L229 420.0 Z" fill="#bc5454"/><rect x="258.3" y="439.4" width="1.4" height="7.600000000000023" fill="#f0d8d8" /><rect x="258.3" y="447.0" width="1.4" height="8.0" fill="#c87878" /><path d="M255.8 438.4 L262.2 438.4 L259 442.4 Z" fill="#f2c6c6"/><path d="M255.8 446.0 L262.2 446.0 L259 450.0 Z" fill="#bc5454"/><rect x="278.3" y="409.2" width="1.4" height="15.199999999999989" fill="#f0d8d8" /><rect x="278.3" y="424.4" width="1.4" height="15.600000000000023" fill="#c87878" /><path d="M275.8 408.2 L282.2 408.2 L279 412.2 Z" fill="#f2c6c6"/><path d="M275.8 415.8 L282.2 415.8 L279 419.8 Z" fill="#f2c6c6"/><path d="M275.8 423.4 L282.2 423.4 L279 427.4 Z" fill="#bc5454"/><path d="M275.8 431.0 L282.2 431.0 L279 435.0 Z" fill="#bc5454"/><rect x="298.3" y="394.2" width="1.4" height="15.199999999999989" fill="#f0d8d8" /><rect x="298.3" y="409.4" width="1.4" height="15.600000000000023" fill="#c87878" /><path d="M295.8 393.2 L302.2 393.2 L299 397.2 Z" fill="#f2c6c6"/><path d="M295.8 400.8 L302.2 400.8 L299 404.8 Z" fill="#f2c6c6"/><path d="M295.8 408.4 L302.2 408.4 L299 412.4 Z" fill="#bc5454"/><path d="M295.8 416.0 L302.2 416.0 L299 420.0 Z" fill="#bc5454"/><rect x="308.3" y="394.0" width="1.4" height="22.80000000000001" fill="#f0d8d8" /><rect x="308.3" y="416.8" width="1.4" height="23.19999999999999" fill="#c87878" /><path d="M305.8 393.0 L312.2 393.0 L309 397.0 Z" fill="#f2c6c6"/><path d="M305.8 400.6 L312.2 400.6 L309 404.6 Z" fill="#f2c6c6"/><path d="M305.8 408.2 L312.2 408.2 L309 412.2 Z" fill="#f2c6c6"/><path d="M305.8 415.8 L312.2 415.8 L309 419.8 Z" fill="#bc5454"/><path d="M305.8 423.4 L312.2 423.4 L309 427.4 Z" fill="#bc5454"/><path d="M305.8 431.0 L312.2 431.0 L309 435.0 Z" fill="#bc5454"/><rect x="318.3" y="424.2" width="1.4" height="15.199999999999989" fill="#f0d8d8" /><rect x="318.3" y="439.4" width="1.4" height="15.600000000000023" fill="#c87878" /><path d="M315.8 423.2 L322.2 423.2 L319 427.2 Z" fill="#f2c6c6"/><path d="M315.8 430.8 L322.2 430.8 L319 434.8 Z" fill="#f2c6c6"/><path d="M315.8 438.4 L322.2 438.4 L319 442.4 Z" fill="#bc5454"/><path d="M315.8 446.0 L322.2 446.0 L319 450.0 Z" fill="#bc5454"/><rect x="338.3" y="439.4" width="1.4" height="7.600000000000023" fill="#f0d8d8" /><rect x="338.3" y="447.0" width="1.4" height="8.0" fill="#c87878" /><path d="M335.8 438.4 L342.2 438.4 L339 442.4 Z" fill="#f2c6c6"/><path d="M335.8 446.0 L342.2 446.0 L339 450.0 Z" fill="#bc5454"/><rect x="348.3" y="424.2" width="1.4" height="15.199999999999989" fill="#f0d8d8" /><rect x="348.3" y="439.4" width="1.4" height="15.600000000000023" fill="#c87878" /><path d="M345.8 423.2 L352.2 423.2 L349 427.2 Z" fill="#f2c6c6"/><path d="M345.8 430.8 L352.2 430.8 L349 434.8 Z" fill="#f2c6c6"/><path d="M345.8 438.4 L352.2 438.4 L349 442.4 Z" fill="#bc5454"/><path d="M345.8 446.0 L352.2 446.0 L349 450.0 Z" fill="#bc5454"/><rect x="358.3" y="439.4" width="1.4" height="7.600000000000023" fill="#f0d8d8" /><rect x="358.3" y="447.0" width="1.4" height="8.0" fill="#c87878" /><path d="M355.8 438.4 L362.2 438.4 L359 442.4 Z" fill="#f2c6c6"/><path d="M355.8 446.0 L362.2 446.0 L359 450.0 Z" fill="#bc5454"/></g><path d="M144 460 L224.5 460 L233.7 463.5 L241.7 460 L313.6 460 L324 464.6 L334.2 462.5 L344.5 463 L354.8 477.4 L365 474.4 L374.2 476 L384 493.8 L394 464.6 L402.7 461.4 L414 460 L495 460 L504.3 463 L513.4 460 L674.5 460 L683.6 463 L692.7 460 L720 460 L729 461 L734.9 462 L744 513.5 L753.8 463.5 L765.7 462 L774.8 462 L781.7 460 L824 460 L834.2 464.4 L842.2 464.4 L853.7 462.3 L872 462.3 L884 463.6 L894 513.5 L903.5 462 L912 460 L1024 460 L1034.3 466 L1043.4 488 L1053.7 460.5 L1059.4 460 L1204.5 460 L1213.6 462 L1223.9 485.8 L1234.2 476.7 L1244 464.6 L1262.7 463.5 L1274 464.1 L1283.8 493.8 L1294 463 L1294 514 L144 514 Z" fill="#3d5ecf"/><rect x="187.2" y="460" width="3.6" height="54" fill="#1f30f0" /><rect x="196.7" y="460" width="3.6" height="54" fill="#1f30f0" /><rect x="187.2" y="460" width="13" height="1" fill="#1f30f0" /><line x1="198.5" y1="96" x2="198.5" y2="514" stroke="#a8a8a8" stroke-width="1.3" stroke-dasharray="3 2.5"/><rect x="879" y="86" width="10" height="9" fill="#c0c0c0" /><rect x="879.5" y="86.5" width="9" height="8.5" fill="none" stroke="#5a5a5a" stroke-width="1"/><rect x="879" y="95" width="1" height="419" fill="#5a5a5a" /><rect x="888" y="95" width="1" height="419" fill="#5a5a5a" /><rect x="1294" y="101" width="17" height="413" fill="#eeeeee" /><rect x="1311" y="22" width="2" height="533" fill="#ffffff" /><path d="M1299.5 113 L1303 109.5 L1306.5 113 Z" fill="#303030"/><path d="M1299.5 503 L1306.5 503 L1303 506.5 Z" fill="#505050"/><defs><linearGradient id="thumbv" x1="0" y1="0" x2="1" y2="0"><stop offset="0" stop-color="#f4f4f4"/><stop offset="0.6" stop-color="#e4e4e4"/><stop offset="1" stop-color="#c8c8c8"/></linearGradient><linearGradient id="thumbh" x1="0" y1="0" x2="0" y2="1"><stop offset="0" stop-color="#fafafa"/><stop offset="0.5" stop-color="#ececec"/><stop offset="1" stop-color="#d4d4d4"/></linearGradient></defs><rect x="1295.5" y="322.5" width="14" height="142" rx="1.5" fill="url(#thumbv)" stroke="#9a9a9a" stroke-width="1"/><rect x="1299" y="391" width="7" height="1" fill="#606060" /><rect x="1299" y="393.5" width="7" height="1" fill="#606060" /><rect x="1299" y="396" width="7" height="1" fill="#606060" /><rect x="144" y="514" width="1150" height="16.5" fill="#ececec" /><rect x="144" y="514" width="1150" height="1" fill="#fafafa" /><rect x="1294" y="514" width="17" height="16.5" fill="#ffffff" /><path d="M155 518.5 L151.5 522 L155 525.5 Z" fill="#303030"/><path d="M1284 518.5 L1287.5 522 L1284 525.5 Z" fill="#303030"/><rect x="543.5" y="515.5" width="17" height="14" rx="1.5" fill="url(#thumbh)" stroke="#8a8a8a" stroke-width="1"/><rect x="548.5" y="519" width="1.2" height="6.5" fill="#404040" /><rect x="551.5" y="519" width="1.2" height="6.5" fill="#404040" /><rect x="554.5" y="519" width="1.2" height="6.5" fill="#404040" /><rect x="3" y="530.5" width="1308" height="24.5" fill="#f0f0f0" /><rect x="6.5" y="533.5" width="17" height="17" fill="#c4c4c4" stroke="#3a8ee6" stroke-width="1"/><rect x="8" y="535" width="3" height="8" fill="#cc4646" /><rect x="12" y="538" width="3" height="4.5" fill="#cc4646" /><rect x="16" y="536" width="3" height="6" fill="#cc4646" /><rect x="20" y="540" width="3" height="3" fill="#cc4646" /><rect x="10" y="544" width="3" height="3" fill="#2446cc" /><rect x="14" y="541" width="3" height="6" fill="#2446cc" /><rect x="18" y="543" width="3" height="4" fill="#2446cc" /><rect x="29.5" y="535.5" width="11" height="13" fill="#ffffff" stroke="#4a7ab0" stroke-width="1.1"/><circle cx="35" cy="541" r="3.4" fill="none" stroke="#3f6aa0" stroke-width="1"/><path d="M34.5 539.2 V541.5 H36.6" fill="none" stroke="#3f6aa0" stroke-width="0.9"/><rect x="31.3" y="546" width="7.5" height="0.9" fill="#4a7ab0" /><path d="M49.5 535.5 H55.5 L60.5 540.5 V548.5 H49.5 Z" fill="#f4f8fc" stroke="#4a7ab0" stroke-width="1.1"/><path d="M55.5 535.5 V540.5 H60.5" fill="#ffffff" stroke="#4a7ab0" stroke-width="1"/><path d="M54.3 544.3 L57.5 548.3 L62.6 535.8" fill="none" stroke="#208a34" stroke-width="1.5"/><rect x="1111" y="533" width="16" height="15.5" fill="#c0c0c0" /><path d="M1114.5 535 V546 L1117 543.5 L1119.5 548 L1121.5 547 L1119.5 542.5 L1123 542.5 Z" fill="#d8d8d8" stroke="#404040" stroke-width="1"/><circle cx="1135" cy="540" r="4.3" fill="#fff" stroke="#202020" stroke-width="1.4"/><path d="M1132.5 540 H1137.5 M1135 537.5 V542.5" stroke="#202020" stroke-width="1.4"/><path d="M1138 543 L1143 548" stroke="#202020" stroke-width="2"/><path d="M1141 534.5 L1142.5 535" stroke="#202020" stroke-width="0.8"/><rect x="1148" y="539.5" width="10" height="2" fill="#202020" /><rect x="1165" y="539.5" width="76" height="3" fill="#ffffff" stroke="#404040" stroke-width="1"/><path d="M1235.5 536 H1241.5 L1240 545.5 H1237 Z" fill="#d0d0d0" stroke="#404040" stroke-width="0.9"/><path d="M1246 540.7 H1256 M1251 535.7 V545.7" stroke="#a8a8a8" stroke-width="1.8"/><rect x="1261.5" y="535.5" width="14" height="12.5" fill="#ffffff" stroke="#505050" stroke-width="1.1"/><rect x="1262.0" y="536" width="13" height="2" fill="#b4b4cc" /><rect x="1262.0" y="538" width="13" height="0.9" fill="#606060" /><rect x="1278.5" y="535.5" width="14" height="12.5" fill="#ffffff" stroke="#505050" stroke-width="1.1"/><rect x="1279.0" y="536" width="13" height="2" fill="#b4b4cc" /><rect x="1279.0" y="538" width="13" height="0.9" fill="#606060" /><rect x="1295.5" y="535.5" width="14" height="12.5" fill="#ffffff" stroke="#505050" stroke-width="1.1"/><rect x="1296.0" y="536" width="13" height="2" fill="#b4b4cc" /><rect x="1296.0" y="538" width="13" height="0.9" fill="#606060" /><path d="M1262.5 542.5 L1265.3 539.8 V545.2 Z M1274.5 542.5 L1271.7 539.8 V545.2 Z" fill="#202020"/><rect x="1266" y="539.5" width="4.5" height="6" fill="none" stroke="#f01010" stroke-width="1" stroke-dasharray="1.5 1"/><path d="M1279.5 542.5 L1282.3 539.8 V545.2 Z M1291.5 542.5 L1288.7 539.8 V545.2 Z" fill="#202020"/><path d="M1283.2 542.5 H1288" stroke="#202020" stroke-width="1" stroke-dasharray="1.6 1.4"/><text x="1302.5" y="546.3" font-size="8.5" fill="#101010" text-anchor="middle" font-weight="bold" textLength="9" lengthAdjust="spacingAndGlyphs">1:1</text><rect x="2" y="555" width="1311" height="1" fill="#a8a8a8" /><rect x="1" y="556" width="1312" height="4" fill="#f6f6f6" /><rect x="1" y="556" width="1312" height="1" fill="#ffffff" /><rect x="1" y="560" width="1312" height="1.3" fill="#7a7a7a" /><rect x="3" y="561.3" width="1310" height="21.5" fill="#f0f0f0" /><rect x="239" y="581" width="1074" height="1" fill="#a8a8a8" /><rect x="239" y="561.3" width="1" height="20" fill="#a8a8a8" /><rect x="240" y="562" width="1073" height="1" fill="#fafafa" /><rect x="10.5" y="565.5" width="15" height="12" fill="#f8fcf8" stroke="#5a5a7a" stroke-width="1"/><rect x="11" y="566" width="14" height="2.5" fill="#90d090" /><rect x="11" y="568.5" width="14" height="0.9" fill="#5a5a7a" /><rect x="11" y="571.5" width="14" height="0.9" fill="#5a5a7a" /><rect x="11" y="574.5" width="14" height="0.9" fill="#5a5a7a" /><rect x="14" y="566" width="0.9" height="11" fill="#5a5a7a" /><text x="29.5" y="576" font-size="11" fill="#000" text-anchor="start" font-weight="normal" textLength="186" lengthAdjust="spacingAndGlyphs">HAPMAP_phase_3_ensembl_v87_hg...</text><path d="M222.5 568.5 L229.5 575.5 M229.5 568.5 L222.5 575.5" stroke="#7a7a7a" stroke-width="1.5"/><rect x="3" y="582.8" width="1307.5" height="3" fill="#3c9aea" /><rect x="3" y="585.8" width="1307.5" height="1" fill="#7a7a7a" /><rect x="5" y="587" width="1304" height="31" fill="#f0f0f0" stroke="#8a8a8a" stroke-width="1"/><text x="25.5" y="609.5" font-size="11" fill="#000" text-anchor="start" font-weight="normal" >Rows: 65</text><text x="111" y="609.5" font-size="11" fill="#000" text-anchor="start" font-weight="normal" textLength="124" lengthAdjust="spacingAndGlyphs">Table view: Homo sapiens</text><defs><linearGradient id="btn" x1="0" y1="0" x2="0" y2="1"><stop offset="0" stop-color="#f6f6f6"/><stop offset="0.5" stop-color="#ececec"/><stop offset="0.55" stop-color="#dedede"/><stop offset="1" stop-color="#d2d2d2"/></linearGradient><linearGradient id="hdr" x1="0" y1="0" x2="0" y2="1"><stop offset="0" stop-color="#ffffff"/><stop offset="1" stop-color="#f0f0f4"/></linearGradient></defs><rect x="594.5" y="593.5" width="122" height="20" rx="2" fill="url(#btn)" stroke="#707070" stroke-width="1"/><text x="655.5" y="607.5" font-size="11" fill="#000" text-anchor="middle" font-weight="normal" textLength="92" lengthAdjust="spacingAndGlyphs">Filter to Selection...</text><rect x="1059.5" y="593.5" width="165" height="19" fill="#ffffff" stroke="#a0a0a0" stroke-width="1"/><rect x="1229.5" y="593.5" width="54" height="20" rx="2" fill="url(#btn)" stroke="#707070" stroke-width="1"/><text x="1256.5" y="607.5" font-size="11" fill="#000" text-anchor="middle" font-weight="normal" >Filter</text><rect x="1289" y="596.5" width="13" height="1" fill="#404040" /><rect x="1290.5" y="599" width="10" height="1" fill="#404040" /><path d="M1290 601.5 H1301 L1295.5 607 Z" fill="#303030"/><rect x="5" y="623.5" width="1304" height="94" fill="#f0f0f0" stroke="#6a6a6a" stroke-width="1.3"/><rect x="6" y="625" width="1286" height="23" fill="url(#hdr)" /><rect x="6" y="647.5" width="1286" height="1.5" fill="#e0e0e8" /><rect x="6" y="650" width="1286" height="15.6" fill="#bebebe" /><rect x="6" y="665.6" width="1286" height="16.1" fill="#f0f0f0" /><rect x="6" y="681.7" width="1286" height="18.3" fill="#ffffff" /><rect x="84.5" y="625" width="1" height="75" fill="#d8d8d8" /><rect x="165" y="625" width="1" height="75" fill="#d8d8d8" /><rect x="299" y="625" width="1" height="75" fill="#d8d8d8" /><rect x="379" y="625" width="1" height="75" fill="#d8d8d8" /><rect x="459" y="625" width="1" height="75" fill="#d8d8d8" /><rect x="539" y="625" width="1" height="75" fill="#d8d8d8" /><rect x="637.5" y="625" width="1" height="75" fill="#d8d8d8" /><rect x="717" y="625" width="1" height="75" fill="#d8d8d8" /><rect x="797.5" y="625" width="1" height="75" fill="#d8d8d8" /><rect x="878" y="625" width="1" height="75" fill="#d8d8d8" /><rect x="958" y="625" width="1" height="75" fill="#d8d8d8" /><rect x="1037.5" y="625" width="1" height="75" fill="#d8d8d8" /><rect x="1117.5" y="625" width="1" height="75" fill="#d8d8d8" /><rect x="1198" y="625" width="1" height="75" fill="#d8d8d8" /><rect x="1278" y="625" width="1" height="75" fill="#d8d8d8" /><text x="10.5" y="641.6" font-size="11" fill="#101010" text-anchor="start" font-weight="normal" clip-path="url(#hclip)">Chromosome</text><text x="90.0" y="641.6" font-size="11" fill="#101010" text-anchor="start" font-weight="normal" clip-path="url(#hclip)">Type</text><text x="170.5" y="641.6" font-size="11" fill="#101010" text-anchor="start" font-weight="normal" clip-path="url(#hclip)">Reference</text><text x="304.5" y="641.6" font-size="11" fill="#101010" text-anchor="start" font-weight="normal" clip-path="url(#hclip)">Allele</text><text x="384.5" y="641.6" font-size="11" fill="#101010" text-anchor="start" font-weight="normal" clip-path="url(#hclip)">Referen...</text><text x="464.5" y="641.6" font-size="11" fill="#101010" text-anchor="start" font-weight="normal" clip-path="url(#hclip)">Length</text><text x="544.5" y="641.6" font-size="11" fill="#101010" text-anchor="start" font-weight="normal" clip-path="url(#hclip)">Zygosity</text><text x="643.0" y="641.6" font-size="11" fill="#101010" text-anchor="start" font-weight="normal" clip-path="url(#hclip)">Count</text><text x="722.5" y="641.6" font-size="11" fill="#101010" text-anchor="start" font-weight="normal" clip-path="url(#hclip)">Coverage</text><text x="803.0" y="641.6" font-size="11" fill="#101010" text-anchor="start" font-weight="normal" clip-path="url(#hclip)">Frequency</text><text x="883.5" y="641.6" font-size="11" fill="#101010" text-anchor="start" font-weight="normal" clip-path="url(#hclip)">Probability</text><text x="963.5" y="641.6" font-size="11" fill="#101010" text-anchor="start" font-weight="normal" clip-path="url(#hclip)">Forward re...</text><text x="1043.0" y="641.6" font-size="11" fill="#101010" text-anchor="start" font-weight="normal" clip-path="url(#hclip)">Reverse re...</text><text x="1123.0" y="641.6" font-size="11" fill="#101010" text-anchor="start" font-weight="normal" clip-path="url(#hclip)">Forward re...</text><text x="1203.5" y="641.6" font-size="11" fill="#101010" text-anchor="start" font-weight="normal" clip-path="url(#hclip)">Reverse re...</text><text x="1283.5" y="641.6" font-size="11" fill="#101010" text-anchor="start" font-weight="normal" clip-path="url(#hclip)">Fo</text><path d="M441 642 L444 637 L444 642 Z" fill="#a8a8a8"/><path d="M858 642 L862 637.5 L862 642 Z" fill="#a8a8a8"/><text x="7" y="661.5" font-size="11" fill="#f4f4f4" text-anchor="start" font-weight="normal" >7</text><text x="86.8" y="661.5" font-size="11" fill="#f4f4f4" text-anchor="start" font-weight="normal" >SNV</text><text x="167.3" y="661.5" font-size="11" fill="#f4f4f4" text-anchor="start" font-weight="normal" >C</text><text x="301.3" y="661.5" font-size="11" fill="#f4f4f4" text-anchor="start" font-weight="normal" >T</text><text x="381.3" y="661.5" font-size="11" fill="#f4f4f4" text-anchor="start" font-weight="normal" >No</text><text x="535.8" y="661.5" font-size="11" fill="#f4f4f4" text-anchor="end" font-weight="normal" >1</text><text x="541.3" y="661.5" font-size="11" fill="#f4f4f4" text-anchor="start" font-weight="normal" >Heterozygous</text><text x="713.8" y="661.5" font-size="11" fill="#f4f4f4" text-anchor="end" font-weight="normal" >6</text><text x="794.3" y="661.5" font-size="11" fill="#f4f4f4" text-anchor="end" font-weight="normal" >1054</text><text x="874.8" y="661.5" font-size="11" fill="#f4f4f4" text-anchor="end" font-weight="normal" >0.57</text><text x="954.8" y="661.5" font-size="11" fill="#f4f4f4" text-anchor="end" font-weight="normal" >0.97</text><text x="1034.3" y="661.5" font-size="11" fill="#f4f4f4" text-anchor="end" font-weight="normal" >4</text><text x="1114.3" y="661.5" font-size="11" fill="#f4f4f4" text-anchor="end" font-weight="normal" >6</text><text x="1194.8" y="661.5" font-size="11" fill="#f4f4f4" text-anchor="end" font-weight="normal" >764</text><text x="1274.8" y="661.5" font-size="11" fill="#f4f4f4" text-anchor="end" font-weight="normal" >1020</text><text x="7" y="677.5" font-size="11" fill="#101010" text-anchor="start" font-weight="normal" >12</text><text x="86.8" y="677.5" font-size="11" fill="#101010" text-anchor="start" font-weight="normal" >SNV</text><text x="167.3" y="677.5" font-size="11" fill="#101010" text-anchor="start" font-weight="normal" >C</text><text x="301.3" y="677.5" font-size="11" fill="#101010" text-anchor="start" font-weight="normal" >T</text><text x="381.3" y="677.5" font-size="11" fill="#101010" text-anchor="start" font-weight="normal" >No</text><text x="535.8" y="677.5" font-size="11" fill="#101010" text-anchor="end" font-weight="normal" >1</text><text x="541.3" y="677.5" font-size="11" fill="#101010" text-anchor="start" font-weight="normal" >Heterozygous</text><text x="713.8" y="677.5" font-size="11" fill="#101010" text-anchor="end" font-weight="normal" >16</text><text x="794.3" y="677.5" font-size="11" fill="#101010" text-anchor="end" font-weight="normal" >2627</text><text x="874.8" y="677.5" font-size="11" fill="#101010" text-anchor="end" font-weight="normal" >0.61</text><text x="954.8" y="677.5" font-size="11" fill="#101010" text-anchor="end" font-weight="normal" >1.00</text><text x="1034.3" y="677.5" font-size="11" fill="#101010" text-anchor="end" font-weight="normal" >15</text><text x="1114.3" y="677.5" font-size="11" fill="#101010" text-anchor="end" font-weight="normal" >16</text><text x="1194.8" y="677.5" font-size="11" fill="#101010" text-anchor="end" font-weight="normal" >2581</text><text x="1274.8" y="677.5" font-size="11" fill="#101010" text-anchor="end" font-weight="normal" >2548</text><text x="7" y="693.4" font-size="11" fill="#101010" text-anchor="start" font-weight="normal" >2</text><text x="86.8" y="693.4" font-size="11" fill="#101010" text-anchor="start" font-weight="normal" >Insertion</text><text x="167.3" y="693.4" font-size="11" fill="#101010" text-anchor="start" font-weight="normal" >-</text><text x="301.3" y="693.4" font-size="11" fill="#101010" text-anchor="start" font-weight="normal" >AA</text><text x="381.3" y="693.4" font-size="11" fill="#101010" text-anchor="start" font-weight="normal" >No</text><text x="535.8" y="693.4" font-size="11" fill="#101010" text-anchor="end" font-weight="normal" >2</text><text x="541.3" y="693.4" font-size="11" fill="#101010" text-anchor="start" font-weight="normal" >Heterozygous</text><text x="713.8" y="693.4" font-size="11" fill="#101010" text-anchor="end" font-weight="normal" >25</text><text x="794.3" y="693.4" font-size="11" fill="#101010" text-anchor="end" font-weight="normal" >4058</text><text x="874.8" y="693.4" font-size="11" fill="#101010" text-anchor="end" font-weight="normal" >0.62</text><text x="954.8" y="693.4" font-size="11" fill="#101010" text-anchor="end" font-weight="normal" >1.00</text><text x="1034.3" y="693.4" font-size="11" fill="#101010" text-anchor="end" font-weight="normal" >25</text><text x="1114.3" y="693.4" font-size="11" fill="#101010" text-anchor="end" font-weight="normal" >25</text><text x="1194.8" y="693.4" font-size="11" fill="#101010" text-anchor="end" font-weight="normal" >8116</text><text x="1274.8" y="693.4" font-size="11" fill="#101010" text-anchor="end" font-weight="normal" >8116</text><rect x="1292" y="625" width="17" height="75" fill="#ececec" /><path d="M1298 661 L1301.5 657.5 L1305 661 Z" fill="#303030"/><path d="M1298 689.5 L1305 689.5 L1301.5 693 Z" fill="#505050"/><rect x="6" y="700" width="1286" height="16.5" fill="#ececec" /><rect x="1292" y="700" width="17" height="16.5" fill="#f0f0f0" /><path d="M17 703 L13.5 706.5 L17 710 Z" fill="#303030"/><path d="M1282.5 705 L1286 708.5 L1282.5 712 Z" fill="#303030"/><rect x="24.5" y="701.5" width="38" height="14" rx="1.5" fill="url(#thumbh)" stroke="#8a8a8a" stroke-width="1"/><rect x="40" y="705" width="1.2" height="6" fill="#404040" /><rect x="42.5" y="705" width="1.2" height="6" fill="#404040" /><rect x="45" y="705" width="1.2" height="6" fill="#404040" /><rect x="566.5" y="724.5" width="182" height="21.5" rx="2" fill="url(#btn)" stroke="#707070" stroke-width="1"/><rect x="584" y="738" width="2" height="3" fill="#2a40c0" /><rect x="587" y="733" width="2" height="8" fill="#2a40c0" /><rect x="590" y="736" width="2" height="5" fill="#2a40c0" /><text x="600" y="739" font-size="11" fill="#000" text-anchor="start" font-weight="normal" textLength="134" lengthAdjust="spacingAndGlyphs">Create Track from Selection</text><rect x="10" y="764" width="3" height="3" fill="#2a36c4" /><rect x="14" y="759" width="3" height="8" fill="#2a36c4" /><rect x="18" y="762" width="3" height="5" fill="#2a36c4" /><rect x="26.5" y="754.5" width="17" height="17" fill="#c8c0b8" stroke="#3a96f0" stroke-width="1.2"/><rect x="27.5" y="755.5" width="15" height="13.8" fill="#5a5a78" /><rect x="28.3" y="756.5" width="2" height="2.2" fill="#9ad878" /><rect x="31.3" y="756.5" width="5" height="2.2" fill="#9ad878" /><rect x="37.3" y="756.5" width="4.6" height="2.2" fill="#9ad878" /><rect x="28.3" y="759.6" width="2" height="2.2" fill="#9ad878" /><rect x="31.3" y="759.6" width="5" height="2.2" fill="#f4f8fc" /><rect x="37.3" y="759.6" width="4.6" height="2.2" fill="#f4f8fc" /><rect x="28.3" y="762.7" width="2" height="2.2" fill="#9ad878" /><rect x="31.3" y="762.7" width="5" height="2.2" fill="#f4f8fc" /><rect x="37.3" y="762.7" width="4.6" height="2.2" fill="#f4f8fc" /><rect x="28.3" y="765.8" width="2" height="2.2" fill="#9ad878" /><rect x="31.3" y="765.8" width="5" height="2.2" fill="#f4f8fc" /><rect x="37.3" y="765.8" width="4.6" height="2.2" fill="#f4f8fc" /><rect x="49.5" y="756.5" width="11" height="13" fill="#ffffff" stroke="#4a7ab0" stroke-width="1.1"/><circle cx="55" cy="762" r="3.4" fill="none" stroke="#3f6aa0" stroke-width="1"/><path d="M54.5 760.2 V762.5 H56.6" fill="none" stroke="#3f6aa0" stroke-width="0.9"/><rect x="51.3" y="767" width="7.5" height="0.9" fill="#4a7ab0" /><path d="M69.5 756.5 H75.5 L80.5 761.5 V769.5 H69.5 Z" fill="#f4f8fc" stroke="#4a7ab0" stroke-width="1.1"/><path d="M75.5 756.5 V761.5 H80.5" fill="#ffffff" stroke="#4a7ab0" stroke-width="1"/><path d="M74.3 765.3 L77.5 769.3 L82.6 756.8" fill="none" stroke="#208a34" stroke-width="1.5"/></svg></body></html>
